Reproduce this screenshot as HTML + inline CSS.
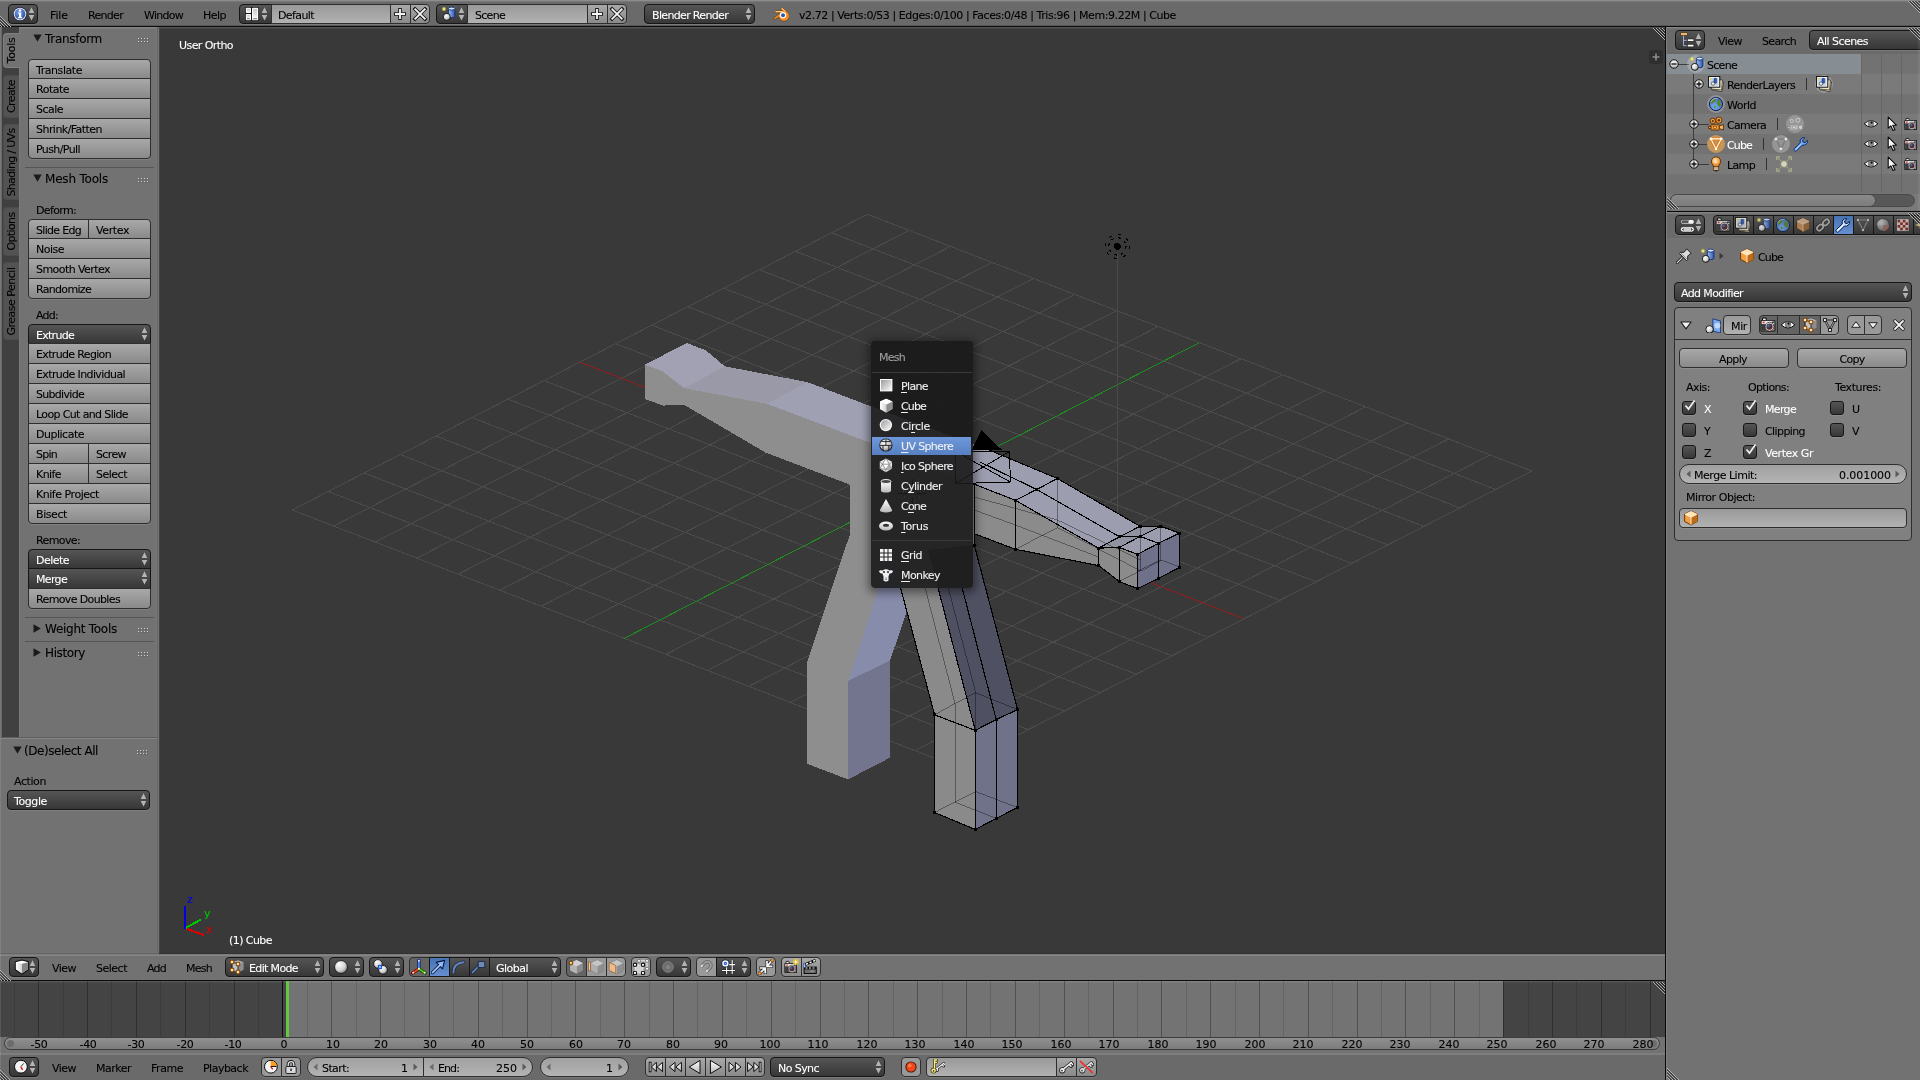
<!DOCTYPE html><html><head><meta charset="utf-8"><title>Blender</title><style>
*{box-sizing:border-box;margin:0;padding:0}
html,body{width:1920px;height:1080px;overflow:hidden;background:#727272}
body{position:relative;font:11px "DejaVu Sans","Liberation Sans",sans-serif;color:#000}
.a{position:absolute}
.t{-webkit-text-stroke:0.1px currentColor;position:absolute;font:11px "DejaVu Sans","Liberation Sans",sans-serif;line-height:13px;white-space:nowrap;color:#000}
.t12{font-size:12px;line-height:14px;}
.b{position:absolute;border:1px solid #2e2e2e;box-shadow:0 1px 0 rgba(255,255,255,0.1)}
.tool{background:linear-gradient(#a8a8a8,#8a8a8a)}
.menu{background:linear-gradient(#555,#373737);border-color:#161616}
.num{background:linear-gradient(#a0a0a0,#b4b4b4)}
.txt{background:linear-gradient(#999,#b2b2b2)}
.radio{background:linear-gradient(#555,#373737);border-color:#161616}
.radios{background:linear-gradient(#4773b3,#658fd1);border-color:#161616}
.tog{background:#999}
.togs{background:#646464}
.opt{background:linear-gradient(#555,#373737);border-color:#161616;border-radius:3px}
.hl{position:absolute;height:1px;background:#555}
</style></head><body><div id="root" style="position:absolute;left:0;top:0;width:1920px;height:1080px;will-change:transform"><svg width="0" height="0" style="position:absolute"><defs>
<linearGradient id="gW" x1="0" y1="0" x2="0" y2="1"><stop offset="0" stop-color="#fff"/><stop offset="1" stop-color="#b8b8b8"/></linearGradient>
<radialGradient id="gBall" cx="0.35" cy="0.3" r="0.8"><stop offset="0" stop-color="#fff"/><stop offset="0.6" stop-color="#d0d0d0"/><stop offset="1" stop-color="#707070"/></radialGradient>
<radialGradient id="gBlue" cx="0.4" cy="0.35" r="0.8"><stop offset="0" stop-color="#7aa0e8"/><stop offset="1" stop-color="#1c3f94"/></radialGradient>
<linearGradient id="gCyl" x1="0" y1="0" x2="1" y2="0"><stop offset="0" stop-color="#9ec0f0"/><stop offset="1" stop-color="#2a55b0"/></linearGradient>
<linearGradient id="gOr" x1="0" y1="0" x2="1" y2="1"><stop offset="0" stop-color="#ffd9a0"/><stop offset="1" stop-color="#d07818"/></linearGradient>
<radialGradient id="gGrey" cx="0.35" cy="0.3" r="0.8"><stop offset="0" stop-color="#c8c8c8"/><stop offset="1" stop-color="#606060"/></radialGradient>

<linearGradient id="gCube" x1="0" y1="0" x2="1" y2="0"><stop offset="0" stop-color="#fff"/><stop offset="1" stop-color="#d4d4d4"/></linearGradient>
<linearGradient id="gScr" x1="0" y1="0" x2="0" y2="1"><stop offset="0" stop-color="#c8c8c8"/><stop offset="1" stop-color="#f4f4f4"/></linearGradient>
<radialGradient id="gLens" cx="0.35" cy="0.35" r="0.8"><stop offset="0" stop-color="#5a70a8"/><stop offset="0.5" stop-color="#3a2a3a"/><stop offset="1" stop-color="#a03020"/></radialGradient>
<radialGradient id="gBulb" cx="0.4" cy="0.35" r="0.8"><stop offset="0" stop-color="#ffe8c0"/><stop offset="0.5" stop-color="#f0a040"/><stop offset="1" stop-color="#c06810"/></radialGradient>
<radialGradient id="gGlobe" cx="0.4" cy="0.7" r="0.9"><stop offset="0" stop-color="#78b0f0"/><stop offset="1" stop-color="#2858b0"/></radialGradient>

<linearGradient id="gPl" x1="0" y1="0" x2="1" y2="1"><stop offset="0" stop-color="#9c9c9c"/><stop offset="1" stop-color="#fafafa"/></linearGradient>
<symbol id="i-info" viewBox="0 0 16 16"><circle cx="8" cy="8" r="7" fill="#16244a"/><circle cx="8" cy="8" r="6.3" fill="#f0f0f0"/><circle cx="8" cy="8" r="5.4" fill="url(#gBlue)"/><path d="M6.3 6.6H9.2V11H10.2V12.2H6V11H7V7.8H6.3Z" fill="#fff"/><circle cx="8" cy="4.6" r="1.25" fill="#fff"/></symbol><symbol id="i-screen" viewBox="0 0 16 16"><rect x="2" y="1" width="14" height="14" rx="1.3" fill="#141414"/><rect x="2.8" y="1.8" width="5.2" height="5.3" rx="0.6" fill="#fff"/><rect x="3.8" y="2.8" width="3.2" height="3.3" fill="url(#gScr)"/><rect x="2.8" y="8" width="5.2" height="6.2" rx="0.6" fill="#fff"/><rect x="3.8" y="9" width="3.2" height="3" fill="url(#gScr)"/><rect x="9" y="1.8" width="6.2" height="12.4" rx="0.6" fill="#fff"/><rect x="10" y="2.8" width="4.2" height="9" fill="url(#gScr)"/><rect x="3.9" y="12.4" width="3" height="0.8" fill="#444"/><rect x="10.1" y="12.4" width="4" height="0.8" fill="#444"/></symbol><symbol id="i-scene" viewBox="0 0 16 16"><circle cx="4" cy="3" r="2.3" fill="#c8c030" opacity="0.45"/><circle cx="4" cy="3" r="1.2" fill="#fffce0" stroke="#d8d040" stroke-width="0.7"/><path d="M8.4 2.5V10.2A3.25 1.5 0 0 0 14.9 10.2V2.5Z" fill="url(#gCyl)" stroke="#16306e" stroke-width="0.9"/><ellipse cx="11.65" cy="2.6" rx="3.25" ry="1.5" fill="#d4e4ff" stroke="#16306e" stroke-width="0.9"/><circle cx="6.8" cy="10.9" r="3.5" fill="url(#gBall)" stroke="#111" stroke-width="0.9"/></symbol><symbol id="i-plus" viewBox="0 0 16 16"><path d="M8 2V14M2 8H14" stroke="#1a1a1a" stroke-width="3.6"/><path d="M8 3V13M3 8H13" stroke="#f6f6f6" stroke-width="1.8"/></symbol><symbol id="i-x" viewBox="0 0 16 16"><path d="M3 3L13 13M13 3L3 13" stroke="#1a1a1a" stroke-width="3.6" stroke-linecap="square"/><path d="M3.3 3.3L12.7 12.7M12.7 3.3L3.3 12.7" stroke="#f6f6f6" stroke-width="1.8" stroke-linecap="square"/></symbol><symbol id="i-blender" viewBox="0 0 16 16"><g stroke="#4a2800" stroke-width="0.5"><path d="M0.6 12.2L7.3 6.9L2.5 6.7Q1.6 5.5 2.9 4.7L9.4 4.6L7.7 2.9Q7.6 1.4 9.2 1.5L14.4 6A5.4 5.2 0 1 1 5.6 11L2.4 13.3Q0.8 13.6 0.6 12.2Z" fill="#f5902a"/></g><path d="M2.6 5.6L9.5 5.5M8.6 2.2L12.5 5.2" stroke="#ffd8a0" stroke-width="0.9" fill="none"/><circle cx="10" cy="9.2" r="3.1" fill="#fff"/><circle cx="10" cy="9.2" r="1.95" fill="#2a5aa8"/></symbol><symbol id="i-plane" viewBox="0 0 16 16"><rect x="2" y="1" width="12.4" height="12.4" fill="#fafafa"/><rect x="3" y="2" width="10.4" height="10.4" fill="url(#gPl)"/></symbol><symbol id="i-mcube" viewBox="0 0 16 16"><path d="M8.2 0.8L14.4 3.6V11L8.2 14.4L2 11V3.6Z" fill="#dcdcdc"/><path d="M8.2 6.6L14.4 3.6V11L8.2 14.4Z" fill="#8e8e8e"/><path d="M2 3.6L8.2 6.6V14.4L2 11Z" fill="url(#gCube)"/><path d="M8.2 0.8L14.4 3.6L8.2 6.6L2 3.6Z" fill="#fff"/></symbol><symbol id="i-circle" viewBox="0 0 16 16"><circle cx="7.9" cy="7.1" r="6.2" fill="#fafafa"/><circle cx="7.9" cy="7.1" r="5.1" fill="url(#gPl)"/></symbol><symbol id="i-uvsphere" viewBox="0 0 16 16"><circle cx="7.9" cy="7" r="6.6" fill="#1a1a1a"/><circle cx="7.9" cy="7" r="5.8" fill="url(#gBall)"/><path d="M2.2 7.4H13.6M7.9 1.2V7.4M5 7.4V12.2M10.8 7.4V12.2M3.4 3.6H12.4" stroke="#1a1a1a" stroke-width="0.9" fill="none"/></symbol><symbol id="i-ico" viewBox="0 0 16 16"><path d="M7.9 0.4L14 3.8V10.6L7.9 14.2L1.8 10.6V3.8Z" fill="#e8e8e8"/><path d="M7.9 0.4L4.4 6.2H11.4ZM4.4 6.2L7.9 11.6L11.4 6.2" fill="#fff" stroke="#555" stroke-width="0.6"/><path d="M1.8 3.8L4.4 6.2L1.8 10.6L7.9 11.6L14 10.6L11.4 6.2L14 3.8M7.9 11.6V14.2" fill="none" stroke="#666" stroke-width="0.6"/><path d="M11.4 6.2L14 10.6L7.9 11.6Z" fill="#aaa"/></symbol><symbol id="i-cyl" viewBox="0 0 16 16"><path d="M3 3.5V12.5A5 2 0 0 0 13 12.5V3.5Z" fill="url(#gW)"/><ellipse cx="8" cy="3.5" rx="5" ry="2" fill="#444" stroke="#eee" stroke-width="1"/></symbol><symbol id="i-cone" viewBox="0 0 16 16"><path d="M8 1L14.2 12.2A6.2 2.3 0 0 1 1.8 12.2Z" fill="url(#gW)"/></symbol><symbol id="i-torus" viewBox="0 0 16 16"><ellipse cx="8" cy="8" rx="7" ry="4.6" fill="url(#gW)"/><ellipse cx="8" cy="7.2" rx="3" ry="1.5" fill="#333"/></symbol><symbol id="i-grid" viewBox="0 0 16 16"><path d="M2 2H14V14H2Z" fill="#f4f4f4"/><path d="M6 2V14M10 2V14M2 6H14M2 10H14" stroke="#222" stroke-width="1"/></symbol><symbol id="i-monkey" viewBox="0 0 16 16"><path d="M1 4.5Q1.5 2.5 4.5 3.5Q8 1 11.5 3.5Q14.5 2.5 15 4.5Q14 7 11.5 6.5Q11 8.5 10.5 9V13.5Q8 15.5 5.5 13.5V9Q5 8.5 4.5 6.5Q2 7 1 4.5Z" fill="#f0f0f0"/><circle cx="6" cy="5" r="1.1" fill="#333"/><circle cx="10" cy="5" r="1.1" fill="#333"/><path d="M6.8 11H9.2M6.8 12.5H9.2" stroke="#777" stroke-width="0.8"/></symbol><symbol id="i-view3d" viewBox="0 0 16 16"><path d="M2.3 2.8L9 1L15.6 2.8V10.5L9 15L2.3 10.5Z" fill="#fff" stroke="#0c0c0c" stroke-width="1.1" stroke-linejoin="round"/><path d="M9 4.8L15.1 3.2V10.2L9 14.4Z" fill="#858585"/><path d="M2.9 3.2L9 4.8V14.4L2.9 10.2Z" fill="url(#gCube)"/></symbol><symbol id="i-editmode" viewBox="0 0 16 16"><path d="M3 3L9 1L14.5 3V10.8L9 13.5L3 11Z" fill="#c4c4c4" stroke="#3a3a3a" stroke-width="0.5"/><path d="M9 5L14.5 3V10.8L9 13.5Z" fill="#8e8e8e"/><path d="M3 3V11M3 3L9 5V13" stroke="#1a1a1a" stroke-width="0.9" fill="none"/><g fill="#ffe6c0" stroke="#8a4600" stroke-width="1"><rect x="1.3" y="1.3" width="3.4" height="3.4"/><rect x="7.3" y="3.3" width="3.4" height="3.4"/><rect x="1.3" y="9.3" width="3.4" height="3.4"/><rect x="7.3" y="11.3" width="3.4" height="3.4"/></g></symbol><symbol id="i-solid" viewBox="0 0 16 16"><circle cx="8" cy="8" r="6.4" fill="url(#gBall)" stroke="#0c0c0c" stroke-width="0.8"/></symbol><symbol id="i-pivot" viewBox="0 0 16 16"><circle cx="5" cy="4.9" r="4.3" fill="url(#gBall)" stroke="#0c0c0c" stroke-width="0.8"/><circle cx="10" cy="10.8" r="4.3" fill="url(#gBall)" stroke="#0c0c0c" stroke-width="0.8"/><rect x="5.6" y="6.6" width="2.8" height="2.8" fill="#fff" stroke="#1858d8" stroke-width="1.3"/></symbol><symbol id="i-manip" viewBox="0 0 16 16"><path d="M7.9 9.8V1" stroke="#0a1a60" stroke-width="3.2" stroke-linecap="round"/><path d="M7.9 9.8L1.6 14" stroke="#600" stroke-width="3.2" stroke-linecap="round"/><path d="M7.9 9.8L14.2 14" stroke="#0a4a00" stroke-width="3.2" stroke-linecap="round"/><path d="M7.9 9.8V1.2" stroke="#4a8af8" stroke-width="1.8" stroke-linecap="round"/><path d="M7.9 9.8L1.8 13.9" stroke="#f04828" stroke-width="1.8" stroke-linecap="round"/><path d="M7.9 9.8L14 13.9" stroke="#58c818" stroke-width="1.8" stroke-linecap="round"/><circle cx="7.9" cy="1.8" r="0.9" fill="#fff"/><circle cx="2.2" cy="13.6" r="0.9" fill="#fff"/><circle cx="13.6" cy="13.6" r="0.9" fill="#fff"/><circle cx="7.9" cy="9.8" r="1" fill="#fff8e0"/></symbol><symbol id="i-m_trans" viewBox="0 0 16 16"><path d="M1.5 13.6L8.5 6.6" stroke="#08183c" stroke-width="3.4" stroke-linecap="round"/><path d="M5.2 3.4L13.6 1.4L11.6 9.8Z" fill="#8ab8ff" stroke="#08183c" stroke-width="1.1" stroke-linejoin="round"/><path d="M1.5 13.6L9.5 5.6" stroke="#a4c8ff" stroke-width="1.7" stroke-linecap="round"/></symbol><symbol id="i-m_rot" viewBox="0 0 16 16"><path d="M2.4 13.5Q2.4 4.2 12.6 3.2" fill="none" stroke="#1e2c48" stroke-width="3.4" stroke-linecap="round"/><path d="M2.4 13.5Q2.4 4.2 12.6 3.2" fill="none" stroke="#6484b8" stroke-width="1.9" stroke-linecap="round"/></symbol><symbol id="i-m_scale" viewBox="0 0 16 16"><path d="M1.6 13.4L8 7" stroke="#1e2c48" stroke-width="3.2" stroke-linecap="round"/><path d="M1.6 13.4L8 7" stroke="#6484b8" stroke-width="1.7" stroke-linecap="round"/><rect x="7.2" y="2.4" width="6.6" height="6.2" fill="#7088b4" stroke="#1e2c48" stroke-width="1"/></symbol><symbol id="i-vertsel" viewBox="0 0 16 16"><g opacity="1"><path d="M2.2 4L8.5 1L14.8 4V11.6L8.5 14.8L2.2 11.6Z" fill="#c6c6c6" stroke="#4a4a4a" stroke-width="0.6" stroke-linejoin="round"/><path d="M8.5 7.2L14.8 4V11.6L8.5 14.8Z" fill="#8c8c8c"/><path d="M2.2 4L8.5 7.2V14.8L2.2 11.6Z" fill="#b4b4b4"/><path d="M2.2 4L8.5 1L14.8 4L8.5 7.2Z" fill="#d0d0d0"/></g><circle cx="3" cy="4" r="1.9" fill="#ffb040" stroke="#5a2a00" stroke-width="0.9"/><circle cx="2.7" cy="3.7" r="0.8" fill="#ffe0a0"/></symbol><symbol id="i-edgesel" viewBox="0 0 16 16"><g opacity="0.8"><path d="M3 4L9.3 1L15.6 4V11.6L9.3 14.8L3 11.6Z" fill="#c6c6c6" stroke="#4a4a4a" stroke-width="0.6" stroke-linejoin="round"/><path d="M9.3 7.2L15.6 4V11.6L9.3 14.8Z" fill="#8c8c8c"/><path d="M3 4L9.3 7.2V14.8L3 11.6Z" fill="#b4b4b4"/><path d="M3 4L9.3 1L15.6 4L9.3 7.2Z" fill="#d0d0d0"/></g><rect x="0.4" y="3" width="2.1" height="8.8" fill="#f4c898" stroke="#8a5a2a" stroke-width="0.7"/></symbol><symbol id="i-facesel" viewBox="0 0 16 16"><g opacity="0.8"><path d="M2.4 4L8.7 1L15.0 4V11.6L8.7 14.8L2.4 11.6Z" fill="#c6c6c6" stroke="#4a4a4a" stroke-width="0.6" stroke-linejoin="round"/><path d="M8.7 7.2L15.0 4V11.6L8.7 14.8Z" fill="#8c8c8c"/><path d="M2.4 4L8.7 7.2V14.8L2.4 11.6Z" fill="#b4b4b4"/><path d="M2.4 4L8.7 1L15.0 4L8.7 7.2Z" fill="#d0d0d0"/></g><path d="M1.2 3.3L7.7 6.5V14.5L1.2 11.5Z" fill="#ecbc8c" stroke="#9a6a3a" stroke-width="0.8"/></symbol><symbol id="i-limit" viewBox="0 0 16 16"><path d="M6 1.9H14V9.8" fill="none" stroke="#e8e8e8" stroke-width="1.2"/><path d="M6 1.9L2 5.8M14 9.8L10 14" stroke="#777" stroke-width="0.6"/><g fill="#fff" stroke="#6a6a6a" stroke-width="0.8"><circle cx="6" cy="1.9" r="1.5"/><circle cx="14" cy="1.9" r="1.5"/><circle cx="14" cy="9.8" r="1.5"/></g><rect x="2" y="5.8" width="8" height="8.2" fill="#d2d2d2" stroke="#f8f8f8" stroke-width="1" stroke-dasharray="1.6 1"/><g fill="#fff" stroke="#0a0a0a" stroke-width="1.1"><circle cx="2" cy="5.8" r="1.7"/><circle cx="10" cy="5.8" r="1.7"/><circle cx="2" cy="14" r="1.7"/><circle cx="10" cy="14" r="1.7"/></g></symbol><symbol id="i-prop" viewBox="0 0 16 16"><circle cx="8" cy="8" r="5.3" fill="#6e6e6e" stroke="#7e7e7e" stroke-width="1"/><circle cx="8" cy="8" r="2.6" fill="#828282" stroke="#666" stroke-width="0.6"/></symbol><symbol id="i-magnet" viewBox="0 0 16 16"><g transform="translate(9.3 6.4) rotate(45)"><path d="M-3.6 5.2V0A3.6 3.6 0 0 1 3.6 0V5.2" fill="none" stroke="#5e5e5e" stroke-width="3.4"/><path d="M-3.6 5.2V0A3.6 3.6 0 0 1 3.6 0V5.2" fill="none" stroke="#9c9c9c" stroke-width="2"/><path d="M-3.6 5.2V3M3.6 5.2V3" stroke="#e0e0e0" stroke-width="2"/></g></symbol><symbol id="i-snapgrid" viewBox="0 0 16 16"><path d="M7.6 2.5V15M13.2 1V15M3 5.6H16M3 11.5H16" stroke="#1a1a1a" stroke-width="2.4" opacity="0.6"/><path d="M7.6 2.5V15M13.2 1V15M3 5.6H16M3 11.5H16" stroke="#f8f8f8" stroke-width="1.1"/><circle cx="6.4" cy="4.4" r="3.9" fill="#0c1c48"/><circle cx="6.4" cy="4.4" r="3.2" fill="#f4f4f4"/><circle cx="6.4" cy="4.4" r="1.6" fill="#1a58e0"/><circle cx="6.4" cy="4.4" r="0.5" fill="#cde"/></symbol><symbol id="i-snaptarget" viewBox="0 0 16 16"><g stroke-linecap="square" fill="none"><path d="M13.8 1.8L9.6 6.6M9 2.6V7.3H13.6" stroke="#222" stroke-width="3"/><path d="M2.2 13.8L6.6 9.6M2.6 9H7.2V13.6" stroke="#222" stroke-width="3"/><path d="M13.8 1.8L9.6 6.6M9 2.6V7.3H13.6" stroke="#f8f8f8" stroke-width="1.7"/><path d="M2.2 13.8L6.6 9.6M2.6 9H7.2V13.6" stroke="#f8f8f8" stroke-width="1.7"/></g><circle cx="14.4" cy="1.2" r="1.6" fill="#f0a040" stroke="#6a3a00" stroke-width="0.7"/><circle cx="1.6" cy="14.4" r="1.6" fill="#f0a040" stroke="#6a3a00" stroke-width="0.7"/></symbol><symbol id="i-render_still" viewBox="0 0 16 16"><rect x="3" y="2.4" width="3.2" height="2.4" rx="0.8" fill="#f0f0f0" stroke="#0c0c0c" stroke-width="0.9"/><rect x="1.4" y="4" width="12.6" height="10" rx="0.9" fill="#0c0c0c"/><rect x="2.2" y="4.8" width="11" height="2.8" fill="#e4e4e4"/><rect x="2.2" y="7.6" width="11" height="5.6" fill="#9a9a9a"/><rect x="2.2" y="7.6" width="3.6" height="5.6" fill="#3c3c3c"/><circle cx="9" cy="9.8" r="3.7" fill="#f4f4f4" stroke="#222" stroke-width="0.6"/><circle cx="9" cy="9.8" r="2.7" fill="url(#gLens)"/><rect x="3.2" y="5.5" width="1.5" height="1.3" fill="#f01818"/><rect x="11" y="5.4" width="2" height="1.2" fill="#223"/><circle cx="12.8" cy="3" r="3" fill="#e4c41c" opacity="0.9"/><path d="M12.8 0.2L13.4 2.4L15.6 3L13.4 3.6L12.8 5.8L12.2 3.6L10 3L12.2 2.4Z" fill="#fff"/></symbol><symbol id="i-render_anim" viewBox="0 0 16 16"><path d="M0.6 7.6H13.8V15H0.6Z" fill="#0c0c0c"/><rect x="1.6" y="10.4" width="11.2" height="3.6" fill="#6c6c6c"/><path d="M2.5 9H4.5M6 9H8M9.5 9H11.5" stroke="#f4f4f4" stroke-width="1"/><path d="M7 12.2H11.5M9.2 11V13.4" stroke="#9a9a9a" stroke-width="0.8"/><path d="M1 6L12.6 1.2" stroke="#0c0c0c" stroke-width="2.8"/><path d="M3 5.2L5 4.4M6.6 3.7L8.6 2.9M10.2 2.2L12.2 1.4" stroke="#f4f4f4" stroke-width="1.5"/><path d="M0.4 4.4L2 4L2.6 8.6L0.6 8.6Z" fill="#a8c8f8" stroke="#1a3a80" stroke-width="0.5"/></symbol><symbol id="i-time" viewBox="0 0 16 16"><circle cx="7.9" cy="7.7" r="6.4" fill="#f4f4f4" stroke="#0c0c0c" stroke-width="1"/><circle cx="7.9" cy="7.7" r="5" fill="none" stroke="#c8c8c8" stroke-width="0.7" stroke-dasharray="0.6 3.3"/><path d="M7.9 7.7L10.7 4.4" stroke="#222" stroke-width="0.9"/><path d="M7.9 7.9L9.6 10.8" stroke="#e01010" stroke-width="1.3"/></symbol><symbol id="i-preview_range" viewBox="0 0 16 16"><circle cx="7.9" cy="7.7" r="6.4" fill="#f4f4f4" stroke="#0c0c0c" stroke-width="1"/><path d="M7.6 7.4V1.9A5.8 5.8 0 0 1 13.7 7.4Z" fill="#ff9c10"/><path d="M7.6 7.5H13.6" stroke="#111" stroke-width="1"/><path d="M7.9 7.9L9.8 10.3" stroke="#e01010" stroke-width="1.3"/></symbol><symbol id="i-lock" viewBox="0 0 16 16"><path d="M5.2 8V5.4A2.8 2.8 0 0 1 10.8 5.4V8" fill="none" stroke="#111" stroke-width="3"/><path d="M5.2 8V5.4A2.8 2.8 0 0 1 10.8 5.4V8" fill="none" stroke="#e8e8e8" stroke-width="1.3"/><rect x="2.9" y="7.6" width="10.2" height="6.8" rx="0.6" fill="#ececec" stroke="#111" stroke-width="1"/><path d="M3.6 9.6H12.4M3.6 11H12.4M3.6 12.4H12.4" stroke="#b8c0c8" stroke-width="0.6"/><rect x="7.4" y="9.6" width="1.3" height="2.4" fill="#111"/></symbol><symbol id="i-rew" viewBox="0 0 16 16"><rect x="2.2" y="3.2" width="1.8" height="9.6" fill="#f4f4f4" stroke="#0c0c0c" stroke-width="0.9"/><path d="M9.4 3.4V12.6L4.4 8Z" fill="url(#gW)" stroke="#0c0c0c" stroke-width="1" stroke-linejoin="round"/><path d="M15.6 3.4V12.6L10.2 8Z" fill="url(#gW)" stroke="#0c0c0c" stroke-width="1" stroke-linejoin="round"/></symbol><symbol id="i-prevkey" viewBox="0 0 16 16"><path d="M8 3.4V12.6L2.4 8Z" fill="url(#gW)" stroke="#0c0c0c" stroke-width="1" stroke-linejoin="round"/><path d="M14.4 3.4V12.6L8.8 8Z" fill="url(#gW)" stroke="#0c0c0c" stroke-width="1" stroke-linejoin="round"/></symbol><symbol id="i-playrev" viewBox="0 0 16 16"><path d="M13 1.4V14.6L2.2 8Z" fill="url(#gW)" stroke="#0c0c0c" stroke-width="1" stroke-linejoin="round"/></symbol><symbol id="i-play" viewBox="0 0 16 16"><path d="M3.4 1.4V14.6L14.4 8Z" fill="url(#gW)" stroke="#0c0c0c" stroke-width="1" stroke-linejoin="round"/></symbol><symbol id="i-nextkey" viewBox="0 0 16 16"><path d="M2 3.4V12.6L7.6 8Z" fill="url(#gW)" stroke="#0c0c0c" stroke-width="1" stroke-linejoin="round"/><path d="M8.4 3.4V12.6L14 8Z" fill="url(#gW)" stroke="#0c0c0c" stroke-width="1" stroke-linejoin="round"/></symbol><symbol id="i-ff" viewBox="0 0 16 16"><path d="M0.6 3.4V12.6L6 8Z" fill="url(#gW)" stroke="#0c0c0c" stroke-width="1" stroke-linejoin="round"/><path d="M6.8 3.4V12.6L12 8Z" fill="url(#gW)" stroke="#0c0c0c" stroke-width="1" stroke-linejoin="round"/><rect x="12.2" y="3.2" width="1.8" height="9.6" fill="#f4f4f4" stroke="#0c0c0c" stroke-width="0.9"/></symbol><symbol id="i-rec" viewBox="0 0 16 16"><circle cx="8" cy="8" r="5.6" fill="#3a1208"/><circle cx="8" cy="8" r="4.7" fill="#f04818"/><circle cx="6.8" cy="6.6" r="1.7" fill="#ff9870" opacity="0.7"/></symbol><symbol id="i-keyingset" viewBox="0 0 16 16"><g transform="translate(3.8 1.2) scale(0.82)"><path d="M6 9.6L13.4 3.6M11.4 5.4L13.2 7.4M13.2 3.8L14.8 5.6" stroke="#1a1a1a" stroke-width="3" stroke-linecap="round" fill="none"/><circle cx="4.3" cy="11.3" r="3.1" fill="#1a1a1a"/><path d="M6 9.6L13.4 3.6M11.4 5.4L13 7.2M13.2 3.8L14.6 5.4" stroke="#f2f2f2" stroke-width="1.5" stroke-linecap="round" fill="none"/><circle cx="4.3" cy="11.3" r="2.3" fill="#f2f2f2"/><circle cx="4" cy="11.6" r="0.9" fill="#333"/></g><path d="M5.6 9V1H7.8M5.6 3.4H7.4" stroke="#4a4200" stroke-width="2.8" stroke-linecap="round" fill="none"/><circle cx="4.6" cy="11.6" r="3" fill="#4a4200"/><path d="M5.6 9V1H7.8M5.6 3.4H7.4" stroke="#f4ec9c" stroke-width="1.3" stroke-linecap="round" fill="none"/><circle cx="4.6" cy="11.6" r="2.2" fill="#f4ec9c"/><circle cx="4.6" cy="11.9" r="0.9" fill="#4a4200"/></symbol><symbol id="i-key_hlt" viewBox="0 0 16 16"><path d="M6 9.6L13.4 3.6M11.4 5.4L13.2 7.4M13.2 3.8L14.8 5.6" stroke="#1a1a1a" stroke-width="3" stroke-linecap="round" fill="none"/><circle cx="4.3" cy="11.3" r="3.1" fill="#1a1a1a"/><path d="M6 9.6L13.4 3.6M11.4 5.4L13 7.2M13.2 3.8L14.6 5.4" stroke="#f2f2f2" stroke-width="1.5" stroke-linecap="round" fill="none"/><circle cx="4.3" cy="11.3" r="2.3" fill="#f2f2f2"/><circle cx="4" cy="11.6" r="0.9" fill="#333"/></symbol><symbol id="i-key_dehlt" viewBox="0 0 16 16"><g opacity="0.8"><path d="M6 9.6L13.4 3.6M11.4 5.4L13.2 7.4M13.2 3.8L14.8 5.6" stroke="#1a1a1a" stroke-width="3" stroke-linecap="round" fill="none"/><circle cx="4.3" cy="11.3" r="3.1" fill="#1a1a1a"/><path d="M6 9.6L13.4 3.6M11.4 5.4L13 7.2M13.2 3.8L14.6 5.4" stroke="#f2f2f2" stroke-width="1.5" stroke-linecap="round" fill="none"/><circle cx="4.3" cy="11.3" r="2.3" fill="#f2f2f2"/><circle cx="4" cy="11.6" r="0.9" fill="#333"/></g><path d="M2.4 2.4L14.4 13.6" stroke="#f03030" stroke-width="1.7" stroke-linecap="round"/></symbol><symbol id="i-outliner" viewBox="0 0 16 16"><rect x="1.3" y="0.5" width="7.4" height="3" fill="#6a3a00"/><rect x="2" y="1.2" width="6" height="1.6" fill="#ffd8a0"/><path d="M4.5 3.6V13.7H7.5M4.5 8.4H7.5" fill="none" stroke="#98b0d8" stroke-width="1"/><rect x="8" y="6.6" width="7.2" height="3.2" fill="#222"/><rect x="8.7" y="7.3" width="5.8" height="1.8" fill="#fff"/><rect x="8" y="12" width="7.2" height="3.2" fill="#222"/><rect x="8.7" y="12.7" width="5.8" height="1.8" fill="#fff"/></symbol><symbol id="i-renderlayers" viewBox="0 0 16 16"><path d="M5.6 4.2L15.6 6L14 15.6L4 13.8Z" fill="#e4dcb8" stroke="#222" stroke-width="0.7"/><path d="M4.2 3L14.4 4L13.6 14L3.4 13Z" fill="#f0e8c8" stroke="#222" stroke-width="0.7"/><rect x="0.6" y="0.4" width="11.2" height="10.8" fill="#fcfcfc" stroke="#0c0c0c" stroke-width="1"/><rect x="2" y="1.8" width="8.4" height="8" fill="#c4d0e4"/><rect x="6" y="2.2" width="2.6" height="5" rx="0.8" fill="#2a5cc0" stroke="#16306e" stroke-width="0.5"/><circle cx="5" cy="7.6" r="1.7" fill="#f4f4f4" stroke="#222" stroke-width="0.6"/><circle cx="2.8" cy="2.6" r="0.9" fill="#f0d820"/></symbol><symbol id="i-world" viewBox="0 0 16 16"><circle cx="8" cy="8" r="6.6" fill="url(#gGlobe)" stroke="#10204a" stroke-width="1"/><path d="M3.2 4.6Q5 2.4 7.6 2.8Q8.8 4.2 7.2 5.4L5.4 6.2Q4.8 8.2 3.4 7.6Q2.2 6.4 3.2 4.6ZM9.8 3.2Q12 3.4 13 5.2L12 7.2L13.6 9Q12.6 11.2 10.8 10.4L9.4 8.4Q8.2 7.4 9 6.2L10.6 5.6ZM6.4 9.4Q8 9.8 7.8 11.6Q6.8 12.6 6 11.4Z" fill="#5a8428"/><path d="M2.6 6.2Q4.6 2 9.6 2.2" fill="none" stroke="#e0ecff" stroke-width="0.9" opacity="0.7"/></symbol><symbol id="i-camera_ob" viewBox="0 0 16 16"><g opacity="1" stroke="#5a2c00" stroke-width="0.9"><circle cx="4.8" cy="4.9" r="2.7" fill="#f49a38"/><circle cx="10.9" cy="4.2" r="3.1" fill="#f49a38"/><rect x="2.7" y="8.8" width="8.6" height="5.2" rx="0.8" fill="#f49a38"/><path d="M11.3 10L15.4 8.6V14L11.3 12.6Z" fill="#ffb868"/><rect x="0.6" y="10.4" width="2.4" height="2" fill="#ffb868"/></g><g opacity="1"><circle cx="4.8" cy="4.9" r="1" fill="#5a2c00"/><circle cx="10.9" cy="4.2" r="1.2" fill="#5a2c00"/><rect x="5.4" y="10.2" width="3" height="2.4" fill="#ffb868" stroke="#5a2c00" stroke-width="0.5"/></g></symbol><symbol id="i-camera_data" viewBox="0 0 16 16"><g opacity="0.9" stroke="#8c8c8c" stroke-width="0.9"><circle cx="4.8" cy="4.9" r="2.7" fill="#c4c4c4"/><circle cx="10.9" cy="4.2" r="3.1" fill="#c4c4c4"/><rect x="2.7" y="8.8" width="8.6" height="5.2" rx="0.8" fill="#c4c4c4"/><path d="M11.3 10L15.4 8.6V14L11.3 12.6Z" fill="#d8d8d8"/><rect x="0.6" y="10.4" width="2.4" height="2" fill="#d8d8d8"/></g><g opacity="0.9"><circle cx="4.8" cy="4.9" r="1" fill="#8c8c8c"/><circle cx="10.9" cy="4.2" r="1.2" fill="#8c8c8c"/><rect x="5.4" y="10.2" width="3" height="2.4" fill="#d8d8d8" stroke="#8c8c8c" stroke-width="0.5"/></g></symbol><symbol id="i-mesh_ob" viewBox="0 0 16 16"><path d="M3 2.9H13.2L8 13Z" fill="none" stroke="#e07810" stroke-width="3" stroke-linejoin="round"/><path d="M3 2.9H13.2L8 13Z" fill="none" stroke="#fff" stroke-width="1.1" stroke-linejoin="round"/><g fill="#fff"><circle cx="3" cy="2.9" r="1.3"/><circle cx="13.2" cy="2.9" r="1.3"/><circle cx="8" cy="13" r="1.3"/></g></symbol><symbol id="i-mesh_data" viewBox="0 0 16 16"><path d="M3 3H12.8L7.9 12.8Z" fill="none" stroke="#7e7e7e" stroke-width="1.6" stroke-linejoin="round"/><g fill="#fafafa" stroke="#8a8a8a" stroke-width="0.5"><circle cx="3" cy="3" r="1.5"/><circle cx="12.8" cy="3" r="1.5"/><circle cx="7.9" cy="12.8" r="1.5"/></g></symbol><symbol id="i-mesh_data_w" viewBox="0 0 16 16"><path d="M3 3H13L8 13Z" fill="none" stroke="#1a1a1a" stroke-width="2.2" stroke-linejoin="round"/><path d="M3 3H13L8 13Z" fill="none" stroke="#b8b8b8" stroke-width="0.9" stroke-linejoin="round"/><g fill="#fafafa" stroke="#0c0c0c" stroke-width="0.9"><rect x="1.6" y="1.6" width="2.8" height="2.8"/><rect x="11.6" y="1.6" width="2.8" height="2.8"/><rect x="6.6" y="11.6" width="2.8" height="2.8"/></g></symbol><symbol id="i-wrench" viewBox="0 0 16 16"><path d="M14.4 4.4L12 6.6L10 6L9.5 4L11.9 1.7A3.9 3.9 0 0 0 7.3 6.9L1.4 12.6A1.55 1.55 0 0 0 3.6 14.8L9.4 9A3.9 3.9 0 0 0 14.4 4.4Z" fill="#6ca4f4" stroke="#10306e" stroke-width="1" stroke-linejoin="round"/><path d="M2.6 13.6L8.6 7.6" stroke="#d0e4ff" stroke-width="0.9"/></symbol><symbol id="i-wrench_w" viewBox="0 0 16 16"><path d="M14.4 4.4L12 6.6L10 6L9.5 4L11.9 1.7A3.9 3.9 0 0 0 7.3 6.9L1.4 12.6A1.55 1.55 0 0 0 3.6 14.8L9.4 9A3.9 3.9 0 0 0 14.4 4.4Z" fill="#c4dcff" stroke="#0a1a40" stroke-width="1" stroke-linejoin="round"/><path d="M2.6 13.6L8.6 7.6" stroke="#fff" stroke-width="0.9"/></symbol><symbol id="i-lamp_ob" viewBox="0 0 16 16"><path d="M8.1 0.8A4.7 4.7 0 0 0 5.2 9.2L5.6 11H10.6L11 9.2A4.7 4.7 0 0 0 8.1 0.8Z" fill="url(#gBulb)" stroke="#5a2c00" stroke-width="0.9"/><path d="M6.4 5.4L7.3 6.8L8.1 5.6L8.9 6.8L9.8 5.4" fill="none" stroke="#fff4e0" stroke-width="0.8"/><rect x="5.5" y="10.8" width="5.2" height="3.6" fill="#f4f4f4" stroke="#5a2c00" stroke-width="0.8"/><path d="M5.5 12H10.7M5.5 13.2H10.7" stroke="#8a5a20" stroke-width="0.6"/><path d="M6.8 14.6H9.4L8.1 16Z" fill="#111"/></symbol><symbol id="i-lamp_data" viewBox="0 0 16 16"><circle cx="8" cy="8" r="3.1" fill="#d6d6d0" stroke="#a0a078" stroke-width="1.1"/><path d="M0.8 4V0.8H4M12 0.8H15.2V4M15.2 12V15.2H12M4 15.2H0.8V12" fill="none" stroke="#b0b08c" stroke-width="1.3"/><path d="M2 2L5.4 5.4M14 2L10.6 5.4M14 14L10.6 10.6M2 14L5.4 10.6" stroke="#a8a888" stroke-width="1"/></symbol><symbol id="i-eye" viewBox="0 0 16 16"><path d="M1.2 7.8Q8 1.4 14.9 7.8Q8 14.2 1.2 7.8Z" fill="#fff" stroke="#0c0c0c" stroke-width="1"/><circle cx="8" cy="7.6" r="2.9" fill="#8c8c8c"/><circle cx="8" cy="7.6" r="2.9" fill="none" stroke="#555" stroke-width="0.5"/><circle cx="8.6" cy="6.6" r="1.1" fill="#0c0c0c"/></symbol><symbol id="i-cursor" viewBox="0 0 16 16"><path d="M4.2 1.2V12.2L6.8 9.8L9 14.6L10.9 13.7L8.8 9.2H12.4Z" fill="#fafafa" stroke="#0c0c0c" stroke-width="1.1" stroke-linejoin="round"/></symbol><symbol id="i-cam_small" viewBox="0 0 16 16"><rect x="3" y="2.4" width="3.2" height="2.4" rx="0.8" fill="#f0f0f0" stroke="#0c0c0c" stroke-width="0.9"/><rect x="1.4" y="4" width="12.6" height="10" rx="0.9" fill="#0c0c0c"/><rect x="2.2" y="4.8" width="11" height="2.8" fill="#e4e4e4"/><rect x="2.2" y="7.6" width="11" height="5.6" fill="#9a9a9a"/><rect x="2.2" y="7.6" width="3.6" height="5.6" fill="#3c3c3c"/><circle cx="9" cy="9.8" r="3.7" fill="#f4f4f4" stroke="#222" stroke-width="0.6"/><circle cx="9" cy="9.8" r="2.7" fill="url(#gLens)"/><rect x="3.2" y="5.5" width="1.5" height="1.3" fill="#f01818"/><rect x="11" y="5.4" width="2" height="1.2" fill="#223"/></symbol><symbol id="i-buttons" viewBox="0 0 16 16"><rect x="1.5" y="2.4" width="13.8" height="4.8" rx="2.4" fill="#fafafa" stroke="#111" stroke-width="0.6"/><rect x="2.4" y="3.3" width="12" height="3" rx="1.5" fill="#555"/><rect x="9.4" y="3" width="5.2" height="3.6" rx="1.6" fill="#f4f4f4"/><rect x="1.5" y="9.8" width="13.8" height="5.2" rx="2.4" fill="#fafafa" stroke="#111" stroke-width="0.6"/><rect x="5" y="11" width="6.8" height="2.8" fill="#c8c8c8"/><path d="M4.6 10.9L3 12.4L4.6 13.9ZM12.2 10.9L13.8 12.4L12.2 13.9Z" fill="#111"/></symbol><symbol id="i-object" viewBox="0 0 16 16"><path d="M8 1L14.4 4V11.4L8 15L1.6 11.4V4Z" fill="#f4a040" stroke="#5a2c00" stroke-width="0.9" stroke-linejoin="round"/><path d="M8 7.2L14.4 4V11.4L8 15Z" fill="#bc6c1a"/><path d="M8 1L14.4 4L8 7.2L1.6 4Z" fill="#ffe4b8"/><path d="M1.9 4.2L8 7.2L14.1 4.2M8 7.2V14.6" fill="none" stroke="#fff0d8" stroke-width="0.9"/></symbol><symbol id="i-constraint" viewBox="0 0 16 16"><g fill="none" stroke="#2a2a2a" stroke-width="3.4"><rect x="-3.4" y="-2.3" width="6.8" height="4.6" rx="2.3" transform="translate(5 10.6) rotate(-40)"/><rect x="-3.4" y="-2.3" width="6.8" height="4.6" rx="2.3" transform="translate(11 5.4) rotate(-40)"/></g><g fill="none" stroke="#b4b4b4" stroke-width="1.7"><rect x="-3.4" y="-2.3" width="6.8" height="4.6" rx="2.3" transform="translate(5 10.6) rotate(-40)"/><rect x="-3.4" y="-2.3" width="6.8" height="4.6" rx="2.3" transform="translate(11 5.4) rotate(-40)"/></g></symbol><symbol id="i-material" viewBox="0 0 16 16"><circle cx="8" cy="8" r="6.4" fill="url(#gGrey)" stroke="#222" stroke-width="0.8"/><path d="M8 8H14.4A6.4 6.4 0 0 1 8 14.4Z" fill="#a06458" opacity="0.75"/><path d="M8 8V1.6A6.4 6.4 0 0 0 1.6 8Z" fill="#c8c8c8" opacity="0.35"/></symbol><symbol id="i-texture" viewBox="0 0 16 16"><rect x="1.6" y="1.8" width="12.4" height="12.4" fill="#d4cccc" stroke="#333" stroke-width="0.7"/><g fill="#8c2418"><rect x="2.6" y="2.8" width="2.6" height="2.6"/><rect x="7.8" y="2.8" width="2.6" height="2.6"/><rect x="5.2" y="5.4" width="2.6" height="2.6"/><rect x="10.4" y="5.4" width="2.6" height="2.6"/><rect x="2.6" y="8" width="2.6" height="2.6"/><rect x="7.8" y="8" width="2.6" height="2.6"/><rect x="5.2" y="10.6" width="2.6" height="2.6"/><rect x="10.4" y="10.6" width="2.6" height="2.6"/></g></symbol><symbol id="i-particles" viewBox="0 0 16 16"><circle cx="8" cy="8" r="5" fill="#d8c060" opacity="0.4"/><path d="M8 0.5L9.4 6.2L15.5 8L9.4 9.6L8 15.5L6.6 9.6L0.5 8L6.6 6.2Z" fill="#fffce8" stroke="#c8a838" stroke-width="0.5"/></symbol><symbol id="i-pin" viewBox="0 0 16 16"><path d="M6.2 9.6L0.9 15" stroke="#111" stroke-width="2.6" stroke-linecap="round"/><path d="M6.2 9.6L1.1 14.8" stroke="#ececec" stroke-width="1.1" stroke-linecap="round"/><path d="M10.6 0.8L15.2 5.4L13.2 6.6L11.6 8.2L11.8 11.4L10.4 12.6L3.6 5.6L4.8 4.2L7.8 4.4L9.4 2.8Z" fill="#dcdcdc" stroke="#111" stroke-width="0.9" stroke-linejoin="round"/><path d="M5 5L10.8 11" stroke="#888" stroke-width="1"/></symbol><symbol id="i-mod_mirror" viewBox="0 0 16 16"><path d="M7.8 1.8L15.6 4V16L7.8 14Z" fill="#7ca8ec" stroke="#16367c" stroke-width="0.9" stroke-linejoin="round"/><circle cx="12.4" cy="8.6" r="2.9" fill="#cfe0fa" opacity="0.85"/><circle cx="4.6" cy="12.4" r="3.8" fill="url(#gBall)" stroke="#0c0c0c" stroke-width="0.9"/></symbol><symbol id="i-cam_big" viewBox="0 0 16 16"><g transform="translate(-1 -1.8) scale(1.17)"><rect x="3" y="2.4" width="3.2" height="2.4" rx="0.8" fill="#f0f0f0" stroke="#0c0c0c" stroke-width="0.9"/><rect x="1.4" y="4" width="12.6" height="10" rx="0.9" fill="#0c0c0c"/><rect x="2.2" y="4.8" width="11" height="2.8" fill="#e4e4e4"/><rect x="2.2" y="7.6" width="11" height="5.6" fill="#9a9a9a"/><rect x="2.2" y="7.6" width="3.6" height="5.6" fill="#3c3c3c"/><circle cx="9" cy="9.8" r="3.7" fill="#f4f4f4" stroke="#222" stroke-width="0.6"/><circle cx="9" cy="9.8" r="2.7" fill="url(#gLens)"/><rect x="3.2" y="5.5" width="1.5" height="1.3" fill="#f01818"/><rect x="11" y="5.4" width="2" height="1.2" fill="#223"/></g></symbol><symbol id="i-mesh_data_t" viewBox="0 0 16 16"><path d="M3 3H13L8 13Z" fill="none" stroke="#8c8c8c" stroke-width="1.2" stroke-linejoin="round"/><g fill="#e8e8e8" stroke="#3a3a3a" stroke-width="0.6"><rect x="1.8" y="1.8" width="2.4" height="2.4"/><rect x="11.8" y="1.8" width="2.4" height="2.4"/><rect x="6.8" y="11.8" width="2.4" height="2.4"/></g></symbol><symbol id="i-object_dim" viewBox="0 0 16 16"><path d="M8 1L14.4 4V11.4L8 15L1.6 11.4V4Z" fill="#c48c54" stroke="#3a2410" stroke-width="0.9" stroke-linejoin="round"/><path d="M8 7.2L14.4 4V11.4L8 15Z" fill="#9c6834"/><path d="M8 1L14.4 4L8 7.2L1.6 4Z" fill="#d8b088"/><path d="M1.9 4.2L8 7.2L14.1 4.2M8 7.2V14.6" fill="none" stroke="#d8d0c8" stroke-width="0.8"/></symbol></defs></svg><div class="a" style="left:0px;top:0px;width:1920px;height:26px;background:#6a6a6a;"></div>
<div class="a" style="left:0px;top:0px;width:1920px;height:1px;background:#8c8c8c;"></div>
<div class="a" style="left:0px;top:1px;width:1920px;height:1px;background:#787878;"></div>
<div class="a" style="left:0px;top:25px;width:1920px;height:1px;background:#585858;"></div>
<div class="a" style="left:0px;top:26px;width:1920px;height:1px;background:#0c0c0c;"></div>
<div class="b menu" style="left:8px;top:4px;width:30px;height:20px;border-radius:4px 4px 4px 4px;"></div>
<svg class="a" style="left:12px;top:6px;" width="16" height="16" viewBox="0 0 16 16"><use href="#i-info"/></svg>
<svg class="a" style="left:28px;top:7px" width="7" height="14" viewBox="0 0 7 14"><path d="M3.5 0.3 L6.3 5.9 L0.7 5.9Z M3.5 13.6 L6.3 8.1 L0.7 8.1Z" fill="#b4b4b4"/></svg>
<div class="t " style="left:50px;top:9px;letter-spacing:-0.105px;">File</div>
<div class="t " style="left:88px;top:9px;letter-spacing:-0.69px;">Render</div>
<div class="t " style="left:144px;top:9px;letter-spacing:-0.732px;">Window</div>
<div class="t " style="left:203px;top:9px;letter-spacing:-0.52px;">Help</div>
<div class="b menu" style="left:239px;top:4px;width:33px;height:20px;border-radius:4px 0px 0px 4px;"></div>
<svg class="a" style="left:243px;top:6px;" width="16" height="16" viewBox="0 0 16 16"><use href="#i-screen"/></svg>
<svg class="a" style="left:261px;top:7px" width="7" height="14" viewBox="0 0 7 14"><path d="M3.5 0.3 L6.3 5.9 L0.7 5.9Z M3.5 13.6 L6.3 8.1 L0.7 8.1Z" fill="#b4b4b4"/></svg>
<div class="b txt" style="left:271px;top:4px;width:120px;height:20px;border-radius:0px 0px 0px 0px;"></div>
<div class="t " style="left:278px;top:9px;letter-spacing:-0.598px;">Default</div>
<div class="b tool" style="left:390px;top:4px;width:21px;height:20px;border-radius:0px 0px 0px 0px;"></div>
<svg class="a" style="left:392px;top:6px;" width="16" height="16" viewBox="0 0 16 16"><use href="#i-plus"/></svg>
<div class="b tool" style="left:410px;top:4px;width:20px;height:20px;border-radius:0px 4px 4px 0px;"></div>
<svg class="a" style="left:412px;top:6px;" width="16" height="16" viewBox="0 0 16 16"><use href="#i-x"/></svg>
<div class="b menu" style="left:436px;top:4px;width:32px;height:20px;border-radius:4px 0px 0px 4px;"></div>
<svg class="a" style="left:440px;top:6px;" width="16" height="16" viewBox="0 0 16 16"><use href="#i-scene"/></svg>
<svg class="a" style="left:458px;top:7px" width="7" height="14" viewBox="0 0 7 14"><path d="M3.5 0.3 L6.3 5.9 L0.7 5.9Z M3.5 13.6 L6.3 8.1 L0.7 8.1Z" fill="#b4b4b4"/></svg>
<div class="b txt" style="left:467px;top:4px;width:121px;height:20px;border-radius:0px 0px 0px 0px;"></div>
<div class="t " style="left:475px;top:9px;letter-spacing:-0.706px;">Scene</div>
<div class="b tool" style="left:587px;top:4px;width:21px;height:20px;border-radius:0px 0px 0px 0px;"></div>
<svg class="a" style="left:589px;top:6px;" width="16" height="16" viewBox="0 0 16 16"><use href="#i-plus"/></svg>
<div class="b tool" style="left:607px;top:4px;width:20px;height:20px;border-radius:0px 4px 4px 0px;"></div>
<svg class="a" style="left:609px;top:6px;" width="16" height="16" viewBox="0 0 16 16"><use href="#i-x"/></svg>
<div class="b menu" style="left:644px;top:4px;width:111px;height:20px;border-radius:4px 4px 4px 4px;"></div>
<div class="t " style="left:652px;top:9px;letter-spacing:-0.661px;color:#fff;">Blender Render</div>
<svg class="a" style="left:745px;top:7px" width="7" height="14" viewBox="0 0 7 14"><path d="M3.5 0.3 L6.3 5.9 L0.7 5.9Z M3.5 13.6 L6.3 8.1 L0.7 8.1Z" fill="#b4b4b4"/></svg>
<svg class="a" style="left:773px;top:6px;" width="16" height="16" viewBox="0 0 16 16"><use href="#i-blender"/></svg>
<div class="t " style="left:799px;top:9px;letter-spacing:-0.428px;">v2.72 | Verts:0/53 | Edges:0/100 | Faces:0/48 | Tris:96 | Mem:9.22M | Cube</div>
<div class="a" style="left:0px;top:27px;width:159px;height:927px;background:#727272;"></div>
<div class="a" style="left:0px;top:27px;width:157px;height:1px;background:#858585;"></div>
<div class="a" style="left:0px;top:28px;width:157px;height:1px;background:#7b7b7b;"></div>
<div class="a" style="left:0px;top:27px;width:2px;height:711px;background:#686868;"></div>
<div class="a" style="left:2px;top:27px;width:17px;height:711px;background:#404040;"></div>
<div class="a" style="left:19px;top:27px;width:1px;height:711px;background:#7a7a7a;"></div>
<div class="a" style="left:3px;top:33px;width:17px;height:35px;background:#727272;border-radius:4px 0 0 4px;border:1px solid #808080;border-right:none"></div>
<div class="t" style="left:-39px;top:44.0px;width:100px;text-align:center;transform:rotate(-90deg);letter-spacing:-0.222px">Tools</div>
<div class="a" style="left:3px;top:75px;width:16px;height:43px;background:#535353;border-radius:4px 0 0 4px;border:1px solid #4c4c4c;border-right:none"></div>
<div class="t" style="left:-39px;top:90.0px;width:100px;text-align:center;transform:rotate(-90deg);letter-spacing:-0.591px">Create</div>
<div class="a" style="left:3px;top:124px;width:16px;height:76px;background:#535353;border-radius:4px 0 0 4px;border:1px solid #4c4c4c;border-right:none"></div>
<div class="t" style="left:-39px;top:155.5px;width:100px;text-align:center;transform:rotate(-90deg);letter-spacing:-0.669px">Shading / UVs</div>
<div class="a" style="left:3px;top:207px;width:16px;height:49px;background:#535353;border-radius:4px 0 0 4px;border:1px solid #4c4c4c;border-right:none"></div>
<div class="t" style="left:-39px;top:225.0px;width:100px;text-align:center;transform:rotate(-90deg);letter-spacing:-0.636px">Options</div>
<div class="a" style="left:3px;top:262px;width:16px;height:78px;background:#535353;border-radius:4px 0 0 4px;border:1px solid #4c4c4c;border-right:none"></div>
<div class="t" style="left:-39px;top:294.5px;width:100px;text-align:center;transform:rotate(-90deg);letter-spacing:-0.498px">Grease Pencil</div>
<div class="a" style="left:156px;top:27px;width:1px;height:927px;background:#777777;"></div>
<div class="a" style="left:157px;top:27px;width:1px;height:927px;background:#666666;"></div>
<div class="a" style="left:158px;top:27px;width:1px;height:927px;background:#747474;"></div>
<svg class="a" style="left:33px;top:34px" width="9" height="8" viewBox="0 0 9 8"><path d="M0.3 0.5 L8.7 0.5 L4.5 7.8Z" fill="#1a1a1a"/></svg>
<div class="t t12 " style="left:45px;top:32px;letter-spacing:-0.3px;">Transform</div>
<svg class="a" style="left:138px;top:38px" width="12" height="6"><rect x="0" y="0" width="1" height="1" fill="#cfcfcf"/><rect x="1" y="1" width="1" height="1" fill="#4a4a4a" opacity="0.6"/><rect x="0" y="3" width="1" height="1" fill="#cfcfcf"/><rect x="1" y="4" width="1" height="1" fill="#4a4a4a" opacity="0.6"/><rect x="3" y="0" width="1" height="1" fill="#cfcfcf"/><rect x="4" y="1" width="1" height="1" fill="#4a4a4a" opacity="0.6"/><rect x="3" y="3" width="1" height="1" fill="#cfcfcf"/><rect x="4" y="4" width="1" height="1" fill="#4a4a4a" opacity="0.6"/><rect x="6" y="0" width="1" height="1" fill="#cfcfcf"/><rect x="7" y="1" width="1" height="1" fill="#4a4a4a" opacity="0.6"/><rect x="6" y="3" width="1" height="1" fill="#cfcfcf"/><rect x="7" y="4" width="1" height="1" fill="#4a4a4a" opacity="0.6"/><rect x="9" y="0" width="1" height="1" fill="#cfcfcf"/><rect x="10" y="1" width="1" height="1" fill="#4a4a4a" opacity="0.6"/><rect x="9" y="3" width="1" height="1" fill="#cfcfcf"/><rect x="10" y="4" width="1" height="1" fill="#4a4a4a" opacity="0.6"/></svg>
<div class="b tool" style="left:28px;top:59px;width:123px;height:20px;border-radius:4px 4px 0px 0px;"></div>
<div class="t " style="left:36px;top:64px;letter-spacing:-0.438px;">Translate</div>
<div class="b tool" style="left:28px;top:78px;width:123px;height:21px;border-radius:0px 0px 0px 0px;"></div>
<div class="t " style="left:36px;top:83px;letter-spacing:-0.5px;">Rotate</div>
<div class="b tool" style="left:28px;top:98px;width:123px;height:21px;border-radius:0px 0px 0px 0px;"></div>
<div class="t " style="left:36px;top:103px;letter-spacing:-0.519px;">Scale</div>
<div class="b tool" style="left:28px;top:118px;width:123px;height:21px;border-radius:0px 0px 0px 0px;"></div>
<div class="t " style="left:36px;top:123px;letter-spacing:-0.537px;">Shrink/Fatten</div>
<div class="b tool" style="left:28px;top:138px;width:123px;height:21px;border-radius:0px 0px 4px 4px;"></div>
<div class="t " style="left:36px;top:143px;letter-spacing:-0.597px;">Push/Pull</div>
<div class="hl" style="left:25px;top:167px;width:129px"></div>
<svg class="a" style="left:33px;top:174px" width="9" height="8" viewBox="0 0 9 8"><path d="M0.3 0.5 L8.7 0.5 L4.5 7.8Z" fill="#1a1a1a"/></svg>
<div class="t t12 " style="left:45px;top:172px;letter-spacing:-0.198px;">Mesh Tools</div>
<svg class="a" style="left:138px;top:178px" width="12" height="6"><rect x="0" y="0" width="1" height="1" fill="#cfcfcf"/><rect x="1" y="1" width="1" height="1" fill="#4a4a4a" opacity="0.6"/><rect x="0" y="3" width="1" height="1" fill="#cfcfcf"/><rect x="1" y="4" width="1" height="1" fill="#4a4a4a" opacity="0.6"/><rect x="3" y="0" width="1" height="1" fill="#cfcfcf"/><rect x="4" y="1" width="1" height="1" fill="#4a4a4a" opacity="0.6"/><rect x="3" y="3" width="1" height="1" fill="#cfcfcf"/><rect x="4" y="4" width="1" height="1" fill="#4a4a4a" opacity="0.6"/><rect x="6" y="0" width="1" height="1" fill="#cfcfcf"/><rect x="7" y="1" width="1" height="1" fill="#4a4a4a" opacity="0.6"/><rect x="6" y="3" width="1" height="1" fill="#cfcfcf"/><rect x="7" y="4" width="1" height="1" fill="#4a4a4a" opacity="0.6"/><rect x="9" y="0" width="1" height="1" fill="#cfcfcf"/><rect x="10" y="1" width="1" height="1" fill="#4a4a4a" opacity="0.6"/><rect x="9" y="3" width="1" height="1" fill="#cfcfcf"/><rect x="10" y="4" width="1" height="1" fill="#4a4a4a" opacity="0.6"/></svg>
<div class="t " style="left:36px;top:204px;letter-spacing:-0.656px;">Deform:</div>
<div class="b tool" style="left:28px;top:219px;width:61px;height:20px;border-radius:4px 0px 0px 0px;"></div>
<div class="b tool" style="left:88px;top:219px;width:63px;height:20px;border-radius:0px 4px 0px 0px;"></div>
<div class="t " style="left:36px;top:224px;letter-spacing:-0.698px;">Slide Edg</div>
<div class="t " style="left:96px;top:224px;letter-spacing:-0.393px;">Vertex</div>
<div class="b tool" style="left:28px;top:238px;width:123px;height:21px;border-radius:0px 0px 0px 0px;"></div>
<div class="t " style="left:36px;top:243px;letter-spacing:-0.506px;">Noise</div>
<div class="b tool" style="left:28px;top:258px;width:123px;height:21px;border-radius:0px 0px 0px 0px;"></div>
<div class="t " style="left:36px;top:263px;letter-spacing:-0.562px;">Smooth Vertex</div>
<div class="b tool" style="left:28px;top:278px;width:123px;height:21px;border-radius:0px 0px 4px 4px;"></div>
<div class="t " style="left:36px;top:283px;letter-spacing:-0.684px;">Randomize</div>
<div class="t " style="left:36px;top:309px;letter-spacing:-0.754px;">Add:</div>
<div class="b menu" style="left:28px;top:324px;width:123px;height:20px;border-radius:4px 4px 0px 0px;"></div>
<div class="t " style="left:36px;top:329px;letter-spacing:-0.717px;color:#fff;">Extrude</div>
<svg class="a" style="left:141px;top:327px" width="7" height="14" viewBox="0 0 7 14"><path d="M3.5 0.3 L6.3 5.9 L0.7 5.9Z M3.5 13.6 L6.3 8.1 L0.7 8.1Z" fill="#b4b4b4"/></svg>
<div class="b tool" style="left:28px;top:343px;width:123px;height:21px;border-radius:0px 0px 0px 0px;"></div>
<div class="t " style="left:36px;top:348px;letter-spacing:-0.655px;">Extrude Region</div>
<div class="b tool" style="left:28px;top:363px;width:123px;height:21px;border-radius:0px 0px 0px 0px;"></div>
<div class="t " style="left:36px;top:368px;letter-spacing:-0.617px;">Extrude Individual</div>
<div class="b tool" style="left:28px;top:383px;width:123px;height:21px;border-radius:0px 0px 0px 0px;"></div>
<div class="t " style="left:36px;top:388px;letter-spacing:-0.701px;">Subdivide</div>
<div class="b tool" style="left:28px;top:403px;width:123px;height:21px;border-radius:0px 0px 0px 0px;"></div>
<div class="t " style="left:36px;top:408px;letter-spacing:-0.634px;">Loop Cut and Slide</div>
<div class="b tool" style="left:28px;top:423px;width:123px;height:21px;border-radius:0px 0px 0px 0px;"></div>
<div class="t " style="left:36px;top:428px;letter-spacing:-0.49px;">Duplicate</div>
<div class="b tool" style="left:28px;top:443px;width:61px;height:21px;border-radius:0px 0px 0px 0px;"></div>
<div class="b tool" style="left:88px;top:443px;width:63px;height:21px;border-radius:0px 0px 0px 0px;"></div>
<div class="t " style="left:36px;top:448px;letter-spacing:-0.75px;">Spin</div>
<div class="t " style="left:96px;top:448px;letter-spacing:-0.616px;">Screw</div>
<div class="b tool" style="left:28px;top:463px;width:61px;height:21px;border-radius:0px 0px 0px 0px;"></div>
<div class="b tool" style="left:88px;top:463px;width:63px;height:21px;border-radius:0px 0px 0px 0px;"></div>
<div class="t " style="left:36px;top:468px;letter-spacing:-0.578px;">Knife</div>
<div class="t " style="left:96px;top:468px;letter-spacing:-0.49px;">Select</div>
<div class="b tool" style="left:28px;top:483px;width:123px;height:21px;border-radius:0px 0px 0px 0px;"></div>
<div class="t " style="left:36px;top:488px;letter-spacing:-0.465px;">Knife Project</div>
<div class="b tool" style="left:28px;top:503px;width:123px;height:21px;border-radius:0px 0px 4px 4px;"></div>
<div class="t " style="left:36px;top:508px;letter-spacing:-0.411px;">Bisect</div>
<div class="t " style="left:36px;top:534px;letter-spacing:-0.621px;">Remove:</div>
<div class="b menu" style="left:28px;top:549px;width:123px;height:20px;border-radius:4px 4px 0px 0px;"></div>
<div class="t " style="left:36px;top:554px;letter-spacing:-0.523px;color:#fff;">Delete</div>
<svg class="a" style="left:141px;top:552px" width="7" height="14" viewBox="0 0 7 14"><path d="M3.5 0.3 L6.3 5.9 L0.7 5.9Z M3.5 13.6 L6.3 8.1 L0.7 8.1Z" fill="#b4b4b4"/></svg>
<div class="b menu" style="left:28px;top:568px;width:123px;height:21px;border-radius:0px 0px 0px 0px;"></div>
<div class="t " style="left:36px;top:573px;letter-spacing:-0.666px;color:#fff;">Merge</div>
<svg class="a" style="left:141px;top:571px" width="7" height="14" viewBox="0 0 7 14"><path d="M3.5 0.3 L6.3 5.9 L0.7 5.9Z M3.5 13.6 L6.3 8.1 L0.7 8.1Z" fill="#b4b4b4"/></svg>
<div class="b tool" style="left:28px;top:588px;width:123px;height:21px;border-radius:0px 0px 4px 4px;"></div>
<div class="t " style="left:36px;top:593px;letter-spacing:-0.633px;">Remove Doubles</div>
<div class="hl" style="left:25px;top:617px;width:129px"></div>
<svg class="a" style="left:33px;top:624px" width="8" height="9" viewBox="0 0 8 9"><path d="M0.5 0.3 L0.5 8.7 L7.8 4.5Z" fill="#1a1a1a"/></svg>
<div class="t t12 " style="left:45px;top:622px;letter-spacing:-0.266px;">Weight Tools</div>
<svg class="a" style="left:138px;top:628px" width="12" height="6"><rect x="0" y="0" width="1" height="1" fill="#cfcfcf"/><rect x="1" y="1" width="1" height="1" fill="#4a4a4a" opacity="0.6"/><rect x="0" y="3" width="1" height="1" fill="#cfcfcf"/><rect x="1" y="4" width="1" height="1" fill="#4a4a4a" opacity="0.6"/><rect x="3" y="0" width="1" height="1" fill="#cfcfcf"/><rect x="4" y="1" width="1" height="1" fill="#4a4a4a" opacity="0.6"/><rect x="3" y="3" width="1" height="1" fill="#cfcfcf"/><rect x="4" y="4" width="1" height="1" fill="#4a4a4a" opacity="0.6"/><rect x="6" y="0" width="1" height="1" fill="#cfcfcf"/><rect x="7" y="1" width="1" height="1" fill="#4a4a4a" opacity="0.6"/><rect x="6" y="3" width="1" height="1" fill="#cfcfcf"/><rect x="7" y="4" width="1" height="1" fill="#4a4a4a" opacity="0.6"/><rect x="9" y="0" width="1" height="1" fill="#cfcfcf"/><rect x="10" y="1" width="1" height="1" fill="#4a4a4a" opacity="0.6"/><rect x="9" y="3" width="1" height="1" fill="#cfcfcf"/><rect x="10" y="4" width="1" height="1" fill="#4a4a4a" opacity="0.6"/></svg>
<div class="hl" style="left:25px;top:641px;width:129px"></div>
<svg class="a" style="left:33px;top:648px" width="8" height="9" viewBox="0 0 8 9"><path d="M0.5 0.3 L0.5 8.7 L7.8 4.5Z" fill="#1a1a1a"/></svg>
<div class="t t12 " style="left:45px;top:646px;letter-spacing:-0.386px;">History</div>
<svg class="a" style="left:138px;top:652px" width="12" height="6"><rect x="0" y="0" width="1" height="1" fill="#cfcfcf"/><rect x="1" y="1" width="1" height="1" fill="#4a4a4a" opacity="0.6"/><rect x="0" y="3" width="1" height="1" fill="#cfcfcf"/><rect x="1" y="4" width="1" height="1" fill="#4a4a4a" opacity="0.6"/><rect x="3" y="0" width="1" height="1" fill="#cfcfcf"/><rect x="4" y="1" width="1" height="1" fill="#4a4a4a" opacity="0.6"/><rect x="3" y="3" width="1" height="1" fill="#cfcfcf"/><rect x="4" y="4" width="1" height="1" fill="#4a4a4a" opacity="0.6"/><rect x="6" y="0" width="1" height="1" fill="#cfcfcf"/><rect x="7" y="1" width="1" height="1" fill="#4a4a4a" opacity="0.6"/><rect x="6" y="3" width="1" height="1" fill="#cfcfcf"/><rect x="7" y="4" width="1" height="1" fill="#4a4a4a" opacity="0.6"/><rect x="9" y="0" width="1" height="1" fill="#cfcfcf"/><rect x="10" y="1" width="1" height="1" fill="#4a4a4a" opacity="0.6"/><rect x="9" y="3" width="1" height="1" fill="#cfcfcf"/><rect x="10" y="4" width="1" height="1" fill="#4a4a4a" opacity="0.6"/></svg>
<div class="a" style="left:0px;top:737px;width:158px;height:1px;background:#5e5e5e;"></div>
<div class="a" style="left:0px;top:738px;width:158px;height:1px;background:#858585;"></div>
<div class="a" style="left:2px;top:739px;width:155px;height:215px;background:#727272;"></div>
<svg class="a" style="left:13px;top:746px" width="9" height="8" viewBox="0 0 9 8"><path d="M0.3 0.5 L8.7 0.5 L4.5 7.8Z" fill="#1a1a1a"/></svg>
<div class="t t12 " style="left:24px;top:744px;letter-spacing:-0.452px;">(De)select All</div>
<svg class="a" style="left:137px;top:750px" width="12" height="6"><rect x="0" y="0" width="1" height="1" fill="#cfcfcf"/><rect x="1" y="1" width="1" height="1" fill="#4a4a4a" opacity="0.6"/><rect x="0" y="3" width="1" height="1" fill="#cfcfcf"/><rect x="1" y="4" width="1" height="1" fill="#4a4a4a" opacity="0.6"/><rect x="3" y="0" width="1" height="1" fill="#cfcfcf"/><rect x="4" y="1" width="1" height="1" fill="#4a4a4a" opacity="0.6"/><rect x="3" y="3" width="1" height="1" fill="#cfcfcf"/><rect x="4" y="4" width="1" height="1" fill="#4a4a4a" opacity="0.6"/><rect x="6" y="0" width="1" height="1" fill="#cfcfcf"/><rect x="7" y="1" width="1" height="1" fill="#4a4a4a" opacity="0.6"/><rect x="6" y="3" width="1" height="1" fill="#cfcfcf"/><rect x="7" y="4" width="1" height="1" fill="#4a4a4a" opacity="0.6"/><rect x="9" y="0" width="1" height="1" fill="#cfcfcf"/><rect x="10" y="1" width="1" height="1" fill="#4a4a4a" opacity="0.6"/><rect x="9" y="3" width="1" height="1" fill="#cfcfcf"/><rect x="10" y="4" width="1" height="1" fill="#4a4a4a" opacity="0.6"/></svg>
<div class="t " style="left:14px;top:775px;letter-spacing:-0.411px;">Action</div>
<div class="b menu" style="left:7px;top:790px;width:143px;height:20px;border-radius:4px 4px 4px 4px;"></div>
<div class="t " style="left:14px;top:795px;letter-spacing:-0.396px;color:#fff;">Toggle</div>
<svg class="a" style="left:140px;top:793px" width="7" height="14" viewBox="0 0 7 14"><path d="M3.5 0.3 L6.3 5.9 L0.7 5.9Z M3.5 13.6 L6.3 8.1 L0.7 8.1Z" fill="#b4b4b4"/></svg>
<svg class="a" style="left:159px;top:27px" width="1506" height="927" viewBox="159 27 1506 927" shape-rendering="crispEdges"><rect x="159" y="27" width="1506" height="927" fill="#393939"/><path d="M292.2 510.0L956.4 766.6M328.2 491.5L992.4 748.2M364.1 473.0L1028.3 729.7M400.1 454.6L1064.3 711.2M436.1 436.1L1100.2 692.7M472.0 417.6L1136.2 674.2M508.0 399.1L1172.1 655.8M543.9 380.6L1208.1 637.3M615.8 343.7L1280.0 600.3M651.8 325.2L1315.9 581.8M687.7 306.7L1351.9 563.4M723.7 288.2L1387.8 544.9M759.6 269.8L1423.8 526.4M795.6 251.3L1459.7 507.9M831.5 232.8L1495.7 489.4M867.5 214.3L1531.6 471.0M292.2 510.0L867.5 214.3M333.8 526.0L909.0 230.4M375.3 542.1L950.5 246.4M416.8 558.1L992.0 262.4M458.3 574.2L1033.5 278.5M499.8 590.2L1075.0 294.5M541.3 606.2L1116.5 310.6M582.8 622.3L1158.0 326.6M665.8 654.4L1241.0 358.7M707.3 670.4L1282.5 374.7M748.9 686.4L1324.1 390.8M790.4 702.5L1365.6 406.8M831.9 718.5L1407.1 422.8M873.4 734.6L1448.6 438.9M914.9 750.6L1490.1 454.9M956.4 766.6L1531.6 471.0" stroke="#4b4b4b" stroke-width="1" fill="none"/><path d="M579.9 362.2L1244.0 618.8" stroke="#8c1e1e" stroke-width="1"/><path d="M624.3 638.3L1199.5 342.6" stroke="#1e8c1e" stroke-width="1"/><path d="M1117.5 254V512" stroke="#4a4a4a" stroke-width="1"/><circle cx="1117.4" cy="246.4" r="3.4" fill="#000"/><circle cx="1117.4" cy="246.4" r="8.6" fill="none" stroke="#000" stroke-width="1.2" stroke-dasharray="3 3.75"/><circle cx="1117.4" cy="246.4" r="12" fill="none" stroke="#000" stroke-width="1.2" stroke-dasharray="3 6.42"/><polygon points="644.9,364.5 662.5,371.3 684.2,388.2 766.8,403.8 870.0,442.6 973.7,484.0 974.2,545.0 930.0,552.0 890.0,556.0 878.9,588.0 848.1,680.9 848.1,779.4 807.1,763.8 807.1,661.9 849.7,535.0 849.7,484.6 765.4,452.5 684.2,404.9 667.9,404.9 663.9,405.8 644.9,399.0" fill="#8e8e8e"/><polygon points="890.0,556.0 878.9,588.0 848.1,680.9 890.0,660.7 906.7,611.7 900.6,588.0 893.0,560.0" fill="#888cab"/><polygon points="848.1,680.9 890.0,660.7 890.0,757.7 848.1,779.4" fill="#73758e"/><polygon points="644.9,364.5 686.9,343.1 705.8,350.3 724.8,366.3 684.2,388.2 662.5,371.3" fill="#a1a1b3"/><polygon points="684.2,388.2 724.8,366.3 807.4,382.1 766.8,403.8" fill="#9999a8"/><polygon points="766.8,403.8 807.4,382.1 870.0,406.0 989.0,450.0 973.7,484.0 870.0,442.6" fill="#9fa0b2"/><polygon points="890.4,550.0 934.6,714.8 934.6,812.5 975.3,829.5 975.3,730.4 928.0,550.0" fill="#8a8a8a"/><polygon points="928.0,550.0 975.3,730.4 996.2,719.5 1017.6,709.6 974.2,545.0" fill="#4f5062"/><polygon points="975.3,730.4 996.2,719.5 1017.6,709.6 1017.6,807.5 996.2,818.4 975.3,829.5" fill="#70728a"/><polygon points="973.7,484.0 1015.4,500.3 1098.6,548.1 1119.3,547.5 1137.6,554.4 1137.6,588.7 1119.3,581.5 1098.7,565.6 1015.4,549.3 973.7,533.5" fill="#8b8b8b"/><polygon points="1137.6,554.4 1158.3,543.3 1179.6,533.1 1179.6,567.4 1158.3,578.5 1137.6,588.7" fill="#6f718a"/><polygon points="973.0,446.0 989.0,450.0 1057.4,478.5 1140.1,526.3 1119.5,536.8 1098.6,548.1 1015.4,500.3 973.7,484.0" fill="#9c9dae"/><polygon points="1098.6,548.1 1119.5,536.8 1140.1,526.3 1160.5,526.2 1140.1,536.4 1119.3,547.5" fill="#9293a1"/><polygon points="1119.3,547.5 1140.1,536.4 1160.5,526.2 1179.6,533.1 1158.3,543.3 1137.6,554.4" fill="#9b9cad"/><polygon points="981.4,430.2 971.7,450 1002.1,450" fill="#000"/><path d="M955.4 451.4H1009.6L1010.3 482L955.4 483.6ZM955.4 451.4L1010.3 482M1009.6 451.4L955.4 483.6" stroke="#000" stroke-width="1" fill="none"/><path d="M989.0 450.0L1057.4 478.5L1140.1 526.3L1160.5 526.2L1179.6 533.1L1179.6 567.4L1158.3 578.5L1137.6 588.7L1119.3 581.5L1098.7 565.6L1015.4 549.3L973.7 533.5M973.7 484.0L1015.4 500.3L1098.6 548.1L1119.3 547.5L1137.6 554.4L1137.6 588.7M1015.4 500.3L1015.4 549.3M1098.6 548.1L1098.7 565.6M1119.3 547.5L1119.3 581.5M1158.3 543.3L1158.3 578.5M1137.6 554.4L1158.3 543.3L1179.6 533.1M1015.4 500.3L1036.7 489.5L1057.4 478.5M980.0 462.0L1036.7 489.5L1119.5 536.8L1140.1 536.4L1158.3 543.3M1098.6 548.1L1119.5 536.8L1140.1 526.3M1119.3 547.5L1140.1 536.4L1160.5 526.2M974.2 484.0L974.2 545.0M900.6 588.0L934.6 714.8L934.6 812.5L975.3 829.5L996.2 818.4L1017.6 807.5L1017.6 709.6L974.2 545.0M938.1 588.0L975.3 730.4L975.3 829.5M962.2 588.0L996.2 719.5L996.2 818.4M934.6 714.8L975.3 730.4L996.2 719.5L1017.6 709.6" stroke="#000" stroke-width="1.15" fill="none" stroke-linejoin="round"/><path d="M925.2 588.0L955.0 703.5L955.0 802.1M948.3 588.0L975.7 692.7L975.7 791.6M934.6 714.8L955.0 703.5L975.7 692.7L1017.6 709.6M934.6 812.5L955.0 802.1L975.7 791.6L1017.6 807.5M955.0 802.1L996.2 818.4M1057.4 478.5L1057.4 527.6L1015.4 549.3M1057.4 527.6L1140.5 570.8L1160.5 560.0L1179.6 567.4M1140.1 526.3L1140.5 570.8L1119.3 581.5M1160.5 526.2L1160.5 560.0L1137.6 571.0M974.2 497.0L1057.4 520.0L1140.5 560.0M974.2 510.0L1015.4 525.0L1098.7 557.0" stroke="#000" stroke-width="0.8" fill="none" opacity="0.45"/><rect x="1055.9" y="477.0" width="3" height="3" fill="#000"/><rect x="1138.6" y="524.8" width="3" height="3" fill="#000"/><rect x="1159.0" y="524.7" width="3" height="3" fill="#000"/><rect x="1178.1" y="531.6" width="3" height="3" fill="#000"/><rect x="1178.1" y="565.9" width="3" height="3" fill="#000"/><rect x="1156.8" y="577.0" width="3" height="3" fill="#000"/><rect x="1136.1" y="587.2" width="3" height="3" fill="#000"/><rect x="1117.8" y="580.0" width="3" height="3" fill="#000"/><rect x="1097.2" y="564.1" width="3" height="3" fill="#000"/><rect x="1013.9" y="547.8" width="3" height="3" fill="#000"/><rect x="1013.9" y="498.8" width="3" height="3" fill="#000"/><rect x="1097.1" y="546.6" width="3" height="3" fill="#000"/><rect x="1117.8" y="546.0" width="3" height="3" fill="#000"/><rect x="1136.1" y="552.9" width="3" height="3" fill="#000"/><rect x="1156.8" y="541.8" width="3" height="3" fill="#000"/><rect x="1035.2" y="488.0" width="3" height="3" fill="#000"/><rect x="1118.0" y="535.3" width="3" height="3" fill="#000"/><rect x="1138.6" y="534.9" width="3" height="3" fill="#000"/><rect x="972.7" y="543.5" width="3" height="3" fill="#000"/><rect x="933.1" y="713.3" width="3" height="3" fill="#000"/><rect x="933.1" y="811.0" width="3" height="3" fill="#000"/><rect x="973.8" y="828.0" width="3" height="3" fill="#000"/><rect x="994.7" y="816.9" width="3" height="3" fill="#000"/><rect x="1016.1" y="806.0" width="3" height="3" fill="#000"/><rect x="1016.1" y="708.1" width="3" height="3" fill="#000"/><rect x="973.8" y="728.9" width="3" height="3" fill="#000"/><rect x="994.7" y="718.0" width="3" height="3" fill="#000"/><circle cx="912" cy="493" r="8.5" fill="none" stroke="#e02020" stroke-width="1" stroke-dasharray="3 3"/><circle cx="912" cy="493" r="8.5" fill="none" stroke="#fff" stroke-width="1" stroke-dasharray="3 3" stroke-dashoffset="3"/><path d="M912 479V488M912 498V507M898 493H907M917 493H926" stroke="#000" stroke-width="1"/><path d="M185 928.2L203.75 935" stroke="#dc0000" stroke-width="2"/><path d="M185 928.2L200.8 919.6" stroke="#00c800" stroke-width="2"/><path d="M185 928.5V906.3" stroke="#0000e6" stroke-width="2"/></svg>
<div class="a" style="left:159px;top:27px;width:1506px;height:1px;background:#525252;"></div>
<div class="a" style="left:159px;top:28px;width:1506px;height:1px;background:#444444;"></div>
<div class="a" style="left:159px;top:29px;width:1px;height:924px;background:#444444;"></div>
<div class="t " style="left:179px;top:39px;letter-spacing:-0.575px;color:#fff;">User Ortho</div>
<div class="t " style="left:229px;top:934px;letter-spacing:-0.562px;color:#fff;">(1) Cube</div>
<div class="t " style="left:187px;top:893px;letter-spacing:-0.781px;color:#0000e6;">z</div>
<div class="t " style="left:204px;top:907px;letter-spacing:-0.516px;color:#00c800;">y</div>
<div class="t " style="left:206px;top:923px;letter-spacing:-0.516px;color:#dc0000;">x</div>
<svg class="a" style="left:1652px;top:28px" width="13" height="13"><path d="M1 0L13 12M4 0L13 9M7 0L13 6M10 0L13 3" stroke="#b0b0b0" stroke-width="1"/><path d="M2.5 0L13 10.5M5.5 0L13 7.5M8.5 0L13 4.5M11.5 0L13 1.5" stroke="#1c1c1c" stroke-width="1"/></svg>
<div class="a" style="left:1649px;top:50px;width:14px;height:14px;background:#2e2e2e;border-radius:3px"></div>
<svg class="a" style="left:1652px;top:53px" width="8" height="8"><path d="M4 0.5V7.5M0.5 4H7.5" stroke="#8a8a8a" stroke-width="1.6"/></svg>
<div class="a" style="left:871px;top:341px;width:102px;height:247px;background:rgba(25,25,25,0.9);border-radius:4px;box-shadow:0 2px 9px 3px rgba(0,0,0,0.42)"></div>
<div class="t " style="left:879px;top:351px;letter-spacing:-0.738px;color:#a0a0a0;">Mesh</div>
<div class="a" style="left:872px;top:372px;width:100px;height:1px;background:#3a3a3a;"></div>
<svg class="a" style="left:878px;top:378px;" width="16" height="16" viewBox="0 0 16 16"><use href="#i-plane"/></svg>
<div class="t " style="left:901px;top:380px;letter-spacing:-0.634px;color:#f0f0f0;"><span style="text-decoration:underline;text-underline-offset:2px">P</span>lane</div>
<svg class="a" style="left:878px;top:398px;" width="16" height="16" viewBox="0 0 16 16"><use href="#i-mcube"/></svg>
<div class="t " style="left:901px;top:400px;letter-spacing:-0.852px;color:#f0f0f0;"><span style="text-decoration:underline;text-underline-offset:2px">C</span>ube</div>
<svg class="a" style="left:878px;top:418px;" width="16" height="16" viewBox="0 0 16 16"><use href="#i-circle"/></svg>
<div class="t " style="left:901px;top:420px;letter-spacing:-0.318px;color:#f0f0f0;">Ci<span style="text-decoration:underline;text-underline-offset:2px">r</span>cle</div>
<div class="a" style="left:872px;top:436.5px;width:99px;height:18px;background:linear-gradient(#6f98da,#5680c2)"></div>
<svg class="a" style="left:878px;top:438px;" width="16" height="16" viewBox="0 0 16 16"><use href="#i-uvsphere"/></svg>
<div class="t " style="left:901px;top:440px;letter-spacing:-0.648px;color:#f0f0f0;"><span style="text-decoration:underline;text-underline-offset:2px">U</span>V Sphere</div>
<svg class="a" style="left:878px;top:458px;" width="16" height="16" viewBox="0 0 16 16"><use href="#i-ico"/></svg>
<div class="t " style="left:901px;top:460px;letter-spacing:-0.628px;color:#f0f0f0;"><span style="text-decoration:underline;text-underline-offset:2px">I</span>co Sphere</div>
<svg class="a" style="left:878px;top:478px;" width="16" height="16" viewBox="0 0 16 16"><use href="#i-cyl"/></svg>
<div class="t " style="left:901px;top:480px;letter-spacing:-0.57px;color:#f0f0f0;">C<span style="text-decoration:underline;text-underline-offset:2px">y</span>linder</div>
<svg class="a" style="left:878px;top:498px;" width="16" height="16" viewBox="0 0 16 16"><use href="#i-cone"/></svg>
<div class="t " style="left:901px;top:500px;letter-spacing:-0.789px;color:#f0f0f0;">C<span style="text-decoration:underline;text-underline-offset:2px">o</span>ne</div>
<svg class="a" style="left:878px;top:518px;" width="16" height="16" viewBox="0 0 16 16"><use href="#i-torus"/></svg>
<div class="t " style="left:901px;top:520px;letter-spacing:-0.359px;color:#f0f0f0;"><span style="text-decoration:underline;text-underline-offset:2px">T</span>orus</div>
<svg class="a" style="left:878px;top:547px;" width="16" height="16" viewBox="0 0 16 16"><use href="#i-grid"/></svg>
<div class="t " style="left:901px;top:549px;letter-spacing:-0.523px;color:#f0f0f0;"><span style="text-decoration:underline;text-underline-offset:2px">G</span>rid</div>
<svg class="a" style="left:878px;top:567px;" width="16" height="16" viewBox="0 0 16 16"><use href="#i-monkey"/></svg>
<div class="t " style="left:901px;top:569px;letter-spacing:-0.576px;color:#f0f0f0;"><span style="text-decoration:underline;text-underline-offset:2px">M</span>onkey</div>
<div class="a" style="left:872px;top:540px;width:100px;height:1px;background:#3a3a3a;"></div>
<div class="a" style="left:0px;top:954px;width:1665px;height:26px;background:#727272;"></div>
<div class="a" style="left:0px;top:953px;width:159px;height:1px;background:#666666;"></div>
<div class="a" style="left:159px;top:953px;width:1506px;height:1px;background:#323232;"></div>
<div class="a" style="left:0px;top:954px;width:1665px;height:1px;background:#7b7b7b;"></div>
<div class="a" style="left:0px;top:955px;width:1665px;height:1px;background:#868686;"></div>
<div class="a" style="left:0px;top:980px;width:1665px;height:1px;background:#0c0c0c;"></div>
<div class="b menu" style="left:9px;top:957px;width:30px;height:20px;border-radius:4px 4px 4px 4px;"></div>
<svg class="a" style="left:13px;top:959px;" width="16" height="16" viewBox="0 0 16 16"><use href="#i-view3d"/></svg>
<svg class="a" style="left:29px;top:960px" width="7" height="14" viewBox="0 0 7 14"><path d="M3.5 0.3 L6.3 5.9 L0.7 5.9Z M3.5 13.6 L6.3 8.1 L0.7 8.1Z" fill="#b4b4b4"/></svg>
<div class="t " style="left:52px;top:962px;letter-spacing:-0.531px;">View</div>
<div class="t " style="left:96px;top:962px;letter-spacing:-0.49px;">Select</div>
<div class="t " style="left:147px;top:962px;letter-spacing:-0.771px;">Add</div>
<div class="t " style="left:186px;top:962px;letter-spacing:-0.738px;">Mesh</div>
<div class="b menu" style="left:225px;top:957px;width:99px;height:20px;border-radius:4px 4px 4px 4px;"></div>
<svg class="a" style="left:229px;top:959px;" width="16" height="16" viewBox="0 0 16 16"><use href="#i-editmode"/></svg>
<div class="t " style="left:249px;top:962px;letter-spacing:-0.642px;color:#fff;">Edit Mode</div>
<svg class="a" style="left:314px;top:960px" width="7" height="14" viewBox="0 0 7 14"><path d="M3.5 0.3 L6.3 5.9 L0.7 5.9Z M3.5 13.6 L6.3 8.1 L0.7 8.1Z" fill="#b4b4b4"/></svg>
<div class="b menu" style="left:329px;top:957px;width:35px;height:20px;border-radius:4px 4px 4px 4px;"></div>
<svg class="a" style="left:333px;top:959px;" width="16" height="16" viewBox="0 0 16 16"><use href="#i-solid"/></svg>
<svg class="a" style="left:354px;top:960px" width="7" height="14" viewBox="0 0 7 14"><path d="M3.5 0.3 L6.3 5.9 L0.7 5.9Z M3.5 13.6 L6.3 8.1 L0.7 8.1Z" fill="#b4b4b4"/></svg>
<div class="b menu" style="left:369px;top:957px;width:35px;height:20px;border-radius:4px 4px 4px 4px;"></div>
<svg class="a" style="left:373px;top:959px;" width="16" height="16" viewBox="0 0 16 16"><use href="#i-pivot"/></svg>
<svg class="a" style="left:394px;top:960px" width="7" height="14" viewBox="0 0 7 14"><path d="M3.5 0.3 L6.3 5.9 L0.7 5.9Z M3.5 13.6 L6.3 8.1 L0.7 8.1Z" fill="#b4b4b4"/></svg>
<div class="b togs" style="left:409px;top:957px;width:21px;height:20px;border-radius:4px 0px 0px 4px;"></div>
<svg class="a" style="left:411px;top:959px;" width="16" height="16" viewBox="0 0 16 16"><use href="#i-manip"/></svg>
<div class="b radios" style="left:429px;top:957px;width:21px;height:20px;border-radius:0px 0px 0px 0px;"></div>
<svg class="a" style="left:431px;top:959px;" width="16" height="16" viewBox="0 0 16 16"><use href="#i-m_trans"/></svg>
<div class="b radio" style="left:449px;top:957px;width:21px;height:20px;border-radius:0px 0px 0px 0px;"></div>
<svg class="a" style="left:451px;top:959px;" width="16" height="16" viewBox="0 0 16 16"><use href="#i-m_rot"/></svg>
<div class="b radio" style="left:469px;top:957px;width:21px;height:20px;border-radius:0px 0px 0px 0px;"></div>
<svg class="a" style="left:471px;top:959px;" width="16" height="16" viewBox="0 0 16 16"><use href="#i-m_scale"/></svg>
<div class="b menu" style="left:489px;top:957px;width:72px;height:20px;border-radius:0px 4px 4px 0px;"></div>
<div class="t " style="left:496px;top:962px;letter-spacing:-0.518px;color:#fff;">Global</div>
<svg class="a" style="left:551px;top:960px" width="7" height="14" viewBox="0 0 7 14"><path d="M3.5 0.3 L6.3 5.9 L0.7 5.9Z M3.5 13.6 L6.3 8.1 L0.7 8.1Z" fill="#b4b4b4"/></svg>
<div class="b b togs" style="left:566px;top:957px;width:21px;height:20px;border-radius:4px 0px 0px 4px;"></div>
<svg class="a" style="left:568px;top:959px;" width="16" height="16" viewBox="0 0 16 16"><use href="#i-vertsel"/></svg>
<div class="b b tog" style="left:586px;top:957px;width:21px;height:20px;border-radius:0px 0px 0px 0px;"></div>
<svg class="a" style="left:588px;top:959px;" width="16" height="16" viewBox="0 0 16 16"><use href="#i-edgesel"/></svg>
<div class="b b tog" style="left:606px;top:957px;width:20px;height:20px;border-radius:0px 4px 4px 0px;"></div>
<svg class="a" style="left:608px;top:959px;" width="16" height="16" viewBox="0 0 16 16"><use href="#i-facesel"/></svg>
<div class="b tog" style="left:631px;top:957px;width:20px;height:20px;border-radius:4px 4px 4px 4px;"></div>
<svg class="a" style="left:633px;top:959px;" width="16" height="16" viewBox="0 0 16 16"><use href="#i-limit"/></svg>
<div class="b menu" style="left:656px;top:957px;width:35px;height:20px;border-radius:4px 4px 4px 4px;"></div>
<svg class="a" style="left:660px;top:959px;" width="16" height="16" viewBox="0 0 16 16"><use href="#i-prop"/></svg>
<svg class="a" style="left:681px;top:960px" width="7" height="14" viewBox="0 0 7 14"><path d="M3.5 0.3 L6.3 5.9 L0.7 5.9Z M3.5 13.6 L6.3 8.1 L0.7 8.1Z" fill="#b4b4b4"/></svg>
<div class="b tog" style="left:696px;top:957px;width:21px;height:20px;border-radius:4px 0px 0px 4px;"></div>
<svg class="a" style="left:698px;top:959px;" width="16" height="16" viewBox="0 0 16 16"><use href="#i-magnet"/></svg>
<div class="b menu" style="left:716px;top:957px;width:35px;height:20px;border-radius:0px 4px 4px 0px;"></div>
<svg class="a" style="left:719px;top:959px;" width="16" height="16" viewBox="0 0 16 16"><use href="#i-snapgrid"/></svg>
<svg class="a" style="left:741px;top:960px" width="7" height="14" viewBox="0 0 7 14"><path d="M3.5 0.3 L6.3 5.9 L0.7 5.9Z M3.5 13.6 L6.3 8.1 L0.7 8.1Z" fill="#b4b4b4"/></svg>
<div class="b tog" style="left:756px;top:957px;width:20px;height:20px;border-radius:4px 4px 4px 4px;"></div>
<svg class="a" style="left:758px;top:959px;" width="16" height="16" viewBox="0 0 16 16"><use href="#i-snaptarget"/></svg>
<div class="b tool" style="left:781px;top:957px;width:21px;height:20px;border-radius:4px 0px 0px 4px;"></div>
<svg class="a" style="left:783px;top:959px;" width="16" height="16" viewBox="0 0 16 16"><use href="#i-render_still"/></svg>
<div class="b tool" style="left:801px;top:957px;width:20px;height:20px;border-radius:0px 4px 4px 0px;"></div>
<svg class="a" style="left:803px;top:959px;" width="16" height="16" viewBox="0 0 16 16"><use href="#i-render_anim"/></svg>
<div class="a" style="left:0px;top:981px;width:1665px;height:56px;background:#444444;"></div>
<div class="a" style="left:286px;top:981px;width:1217px;height:56px;background:#737373;"></div>
<div class="a" style="left:0px;top:981px;width:1665px;height:1px;background:rgba(255,255,255,0.1);"></div>
<div class="a" style="left:0px;top:982px;width:1665px;height:1px;background:rgba(255,255,255,0.05);"></div>
<svg class="a" style="left:0;top:981px" width="1665" height="56"><path d="M38.5 0V56M87.5 0V56M136.5 0V56M185.5 0V56M234.5 0V56M282.5 0V56M331.5 0V56M380.5 0V56M429.5 0V56M478.5 0V56M527.5 0V56M575.5 0V56M624.5 0V56M673.5 0V56M722.5 0V56M771.5 0V56M820.5 0V56M868.5 0V56M917.5 0V56M966.5 0V56M1015.5 0V56M1064.5 0V56M1113.5 0V56M1161.5 0V56M1210.5 0V56M1259.5 0V56M1308.5 0V56M1357.5 0V56M1405.5 0V56M1454.5 0V56M1503.5 0V56M1552.5 0V56M1601.5 0V56M1650.5 0V56" stroke="#000" stroke-opacity="0.3" stroke-width="1"/><path d="M14.5 0V56M63.5 0V56M111.5 0V56M160.5 0V56M209.5 0V56M258.5 0V56M307.5 0V56M356.5 0V56M404.5 0V56M453.5 0V56M502.5 0V56M551.5 0V56M600.5 0V56M649.5 0V56M697.5 0V56M746.5 0V56M795.5 0V56M844.5 0V56M893.5 0V56M942.5 0V56M990.5 0V56M1039.5 0V56M1088.5 0V56M1137.5 0V56M1186.5 0V56M1235.5 0V56M1283.5 0V56M1332.5 0V56M1381.5 0V56M1430.5 0V56M1479.5 0V56M1528.5 0V56M1576.5 0V56M1625.5 0V56" stroke="#000" stroke-opacity="0.13" stroke-width="1"/><path d="M282.5 0V56" stroke="#000" stroke-opacity="0.7" stroke-width="1"/><rect x="286" y="0" width="3" height="56" fill="#64c840"/></svg>
<div class="a" style="left:0px;top:1037px;width:1665px;height:18px;background:#727272;"></div>
<div class="a" style="left:4px;top:1037px;width:1656px;height:13px;border-radius:6.5px;border:1px solid #3c3c3c;background:linear-gradient(#909090,#7c7c7c)"></div>
<div class="a" style="left:7px;top:1040px;width:7px;height:7px;border-radius:3.5px;background:#6c6c6c"></div>
<div class="a" style="left:1650px;top:1040px;width:7px;height:7px;border-radius:3.5px;background:#6c6c6c"></div>
<div class="t" style="left:-61px;width:200px;text-align:center;top:1038px;letter-spacing:-0.323px;">-50</div>
<div class="t" style="left:-12px;width:200px;text-align:center;top:1038px;letter-spacing:-0.323px;">-40</div>
<div class="t" style="left:36px;width:200px;text-align:center;top:1038px;letter-spacing:-0.323px;">-30</div>
<div class="t" style="left:85px;width:200px;text-align:center;top:1038px;letter-spacing:-0.323px;">-20</div>
<div class="t" style="left:133px;width:200px;text-align:center;top:1038px;letter-spacing:-0.323px;">-10</div>
<div class="t" style="left:184px;width:200px;text-align:center;top:1038px;letter-spacing:0.0px;">0</div>
<div class="t" style="left:233px;width:200px;text-align:center;top:1038px;letter-spacing:0.0px;">10</div>
<div class="t" style="left:281px;width:200px;text-align:center;top:1038px;letter-spacing:0.0px;">20</div>
<div class="t" style="left:330px;width:200px;text-align:center;top:1038px;letter-spacing:0.0px;">30</div>
<div class="t" style="left:378px;width:200px;text-align:center;top:1038px;letter-spacing:0.0px;">40</div>
<div class="t" style="left:427px;width:200px;text-align:center;top:1038px;letter-spacing:0.0px;">50</div>
<div class="t" style="left:476px;width:200px;text-align:center;top:1038px;letter-spacing:0.0px;">60</div>
<div class="t" style="left:524px;width:200px;text-align:center;top:1038px;letter-spacing:0.0px;">70</div>
<div class="t" style="left:573px;width:200px;text-align:center;top:1038px;letter-spacing:0.0px;">80</div>
<div class="t" style="left:621px;width:200px;text-align:center;top:1038px;letter-spacing:0.0px;">90</div>
<div class="t" style="left:670px;width:200px;text-align:center;top:1038px;letter-spacing:0.0px;">100</div>
<div class="t" style="left:718px;width:200px;text-align:center;top:1038px;letter-spacing:0.0px;">110</div>
<div class="t" style="left:767px;width:200px;text-align:center;top:1038px;letter-spacing:0.0px;">120</div>
<div class="t" style="left:815px;width:200px;text-align:center;top:1038px;letter-spacing:0.0px;">130</div>
<div class="t" style="left:864px;width:200px;text-align:center;top:1038px;letter-spacing:0.0px;">140</div>
<div class="t" style="left:912px;width:200px;text-align:center;top:1038px;letter-spacing:0.0px;">150</div>
<div class="t" style="left:961px;width:200px;text-align:center;top:1038px;letter-spacing:0.0px;">160</div>
<div class="t" style="left:1009px;width:200px;text-align:center;top:1038px;letter-spacing:0.0px;">170</div>
<div class="t" style="left:1058px;width:200px;text-align:center;top:1038px;letter-spacing:0.0px;">180</div>
<div class="t" style="left:1106px;width:200px;text-align:center;top:1038px;letter-spacing:0.0px;">190</div>
<div class="t" style="left:1155px;width:200px;text-align:center;top:1038px;letter-spacing:0.0px;">200</div>
<div class="t" style="left:1203px;width:200px;text-align:center;top:1038px;letter-spacing:0.0px;">210</div>
<div class="t" style="left:1252px;width:200px;text-align:center;top:1038px;letter-spacing:0.0px;">220</div>
<div class="t" style="left:1300px;width:200px;text-align:center;top:1038px;letter-spacing:0.0px;">230</div>
<div class="t" style="left:1349px;width:200px;text-align:center;top:1038px;letter-spacing:0.0px;">240</div>
<div class="t" style="left:1397px;width:200px;text-align:center;top:1038px;letter-spacing:0.0px;">250</div>
<div class="t" style="left:1446px;width:200px;text-align:center;top:1038px;letter-spacing:0.0px;">260</div>
<div class="t" style="left:1494px;width:200px;text-align:center;top:1038px;letter-spacing:0.0px;">270</div>
<div class="t" style="left:1543px;width:200px;text-align:center;top:1038px;letter-spacing:0.0px;">280</div>
<svg class="a" style="left:1652px;top:982px" width="13" height="13"><path d="M1 0L13 12M4 0L13 9M7 0L13 6M10 0L13 3" stroke="#aaa" stroke-width="1"/><path d="M2.5 0L13 10.5M5.5 0L13 7.5M8.5 0L13 4.5" stroke="#222" stroke-width="1"/></svg>
<div class="a" style="left:0px;top:1053px;width:1665px;height:2px;background:#7e7e7e;"></div>
<div class="a" style="left:0px;top:1055px;width:1665px;height:25px;background:#6a6a6a;"></div>
<div class="b menu" style="left:9px;top:1057px;width:30px;height:20px;border-radius:4px 4px 4px 4px;"></div>
<svg class="a" style="left:13px;top:1059px;" width="16" height="16" viewBox="0 0 16 16"><use href="#i-time"/></svg>
<svg class="a" style="left:29px;top:1060px" width="7" height="14" viewBox="0 0 7 14"><path d="M3.5 0.3 L6.3 5.9 L0.7 5.9Z M3.5 13.6 L6.3 8.1 L0.7 8.1Z" fill="#b4b4b4"/></svg>
<div class="t " style="left:52px;top:1062px;letter-spacing:-0.531px;">View</div>
<div class="t " style="left:96px;top:1062px;letter-spacing:-0.5px;">Marker</div>
<div class="t " style="left:151px;top:1062px;letter-spacing:-0.453px;">Frame</div>
<div class="t " style="left:203px;top:1062px;letter-spacing:-0.512px;">Playback</div>
<div class="b tog" style="left:261px;top:1057px;width:21px;height:20px;border-radius:4px 0px 0px 4px;"></div>
<svg class="a" style="left:263px;top:1059px;" width="16" height="16" viewBox="0 0 16 16"><use href="#i-preview_range"/></svg>
<div class="b tog" style="left:281px;top:1057px;width:20px;height:20px;border-radius:0px 4px 4px 0px;"></div>
<svg class="a" style="left:283px;top:1059px;" width="16" height="16" viewBox="0 0 16 16"><use href="#i-lock"/></svg>
<div class="b num" style="left:307px;top:1057px;width:117px;height:20px;border-radius:10px 0px 0px 10px;"></div>
<svg class="a" style="left:313px;top:1063px" width="5" height="8"><path d="M4.5 0.5L0.5 4L4.5 7.5Z" fill="#6a6a6a"/></svg>
<svg class="a" style="left:413px;top:1063px" width="5" height="8"><path d="M0.5 0.5L4.5 4L0.5 7.5Z" fill="#5a5a5a"/></svg>
<div class="t " style="left:322px;top:1062px;letter-spacing:-0.594px;">Start:</div>
<div class="t" style="left:208px;width:200px;text-align:right;top:1062px;letter-spacing:0.0px;">1</div>
<div class="b num" style="left:423px;top:1057px;width:110px;height:20px;border-radius:0px 10px 10px 0px;"></div>
<svg class="a" style="left:429px;top:1063px" width="5" height="8"><path d="M4.5 0.5L0.5 4L4.5 7.5Z" fill="#6a6a6a"/></svg>
<svg class="a" style="left:522px;top:1063px" width="5" height="8"><path d="M0.5 0.5L4.5 4L0.5 7.5Z" fill="#5a5a5a"/></svg>
<div class="t " style="left:438px;top:1062px;letter-spacing:-0.902px;">End:</div>
<div class="t" style="left:317px;width:200px;text-align:right;top:1062px;letter-spacing:0.0px;">250</div>
<div class="b num" style="left:540px;top:1057px;width:89px;height:20px;border-radius:10px 10px 10px 10px;"></div>
<svg class="a" style="left:546px;top:1063px" width="5" height="8"><path d="M4.5 0.5L0.5 4L4.5 7.5Z" fill="#6a6a6a"/></svg>
<svg class="a" style="left:618px;top:1063px" width="5" height="8"><path d="M0.5 0.5L4.5 4L0.5 7.5Z" fill="#5a5a5a"/></svg>
<div class="t" style="left:413px;width:200px;text-align:right;top:1062px;letter-spacing:0.0px;">1</div>
<div class="b tool" style="left:645px;top:1057px;width:21px;height:20px;border-radius:4px 0px 0px 4px;"></div>
<svg class="a" style="left:647px;top:1059px;" width="16" height="16" viewBox="0 0 16 16"><use href="#i-rew"/></svg>
<div class="b tool" style="left:665px;top:1057px;width:21px;height:20px;border-radius:0px 0px 0px 0px;"></div>
<svg class="a" style="left:667px;top:1059px;" width="16" height="16" viewBox="0 0 16 16"><use href="#i-prevkey"/></svg>
<div class="b tool" style="left:685px;top:1057px;width:21px;height:20px;border-radius:0px 0px 0px 0px;"></div>
<svg class="a" style="left:687px;top:1059px;" width="16" height="16" viewBox="0 0 16 16"><use href="#i-playrev"/></svg>
<div class="b tool" style="left:705px;top:1057px;width:21px;height:20px;border-radius:0px 0px 0px 0px;"></div>
<svg class="a" style="left:707px;top:1059px;" width="16" height="16" viewBox="0 0 16 16"><use href="#i-play"/></svg>
<div class="b tool" style="left:725px;top:1057px;width:21px;height:20px;border-radius:0px 0px 0px 0px;"></div>
<svg class="a" style="left:727px;top:1059px;" width="16" height="16" viewBox="0 0 16 16"><use href="#i-nextkey"/></svg>
<div class="b tool" style="left:745px;top:1057px;width:20px;height:20px;border-radius:0px 4px 4px 0px;"></div>
<svg class="a" style="left:747px;top:1059px;" width="16" height="16" viewBox="0 0 16 16"><use href="#i-ff"/></svg>
<div class="b menu" style="left:770px;top:1057px;width:115px;height:20px;border-radius:4px 4px 4px 4px;"></div>
<div class="t " style="left:778px;top:1062px;letter-spacing:-0.569px;color:#fff;">No Sync</div>
<svg class="a" style="left:875px;top:1060px" width="7" height="14" viewBox="0 0 7 14"><path d="M3.5 0.3 L6.3 5.9 L0.7 5.9Z M3.5 13.6 L6.3 8.1 L0.7 8.1Z" fill="#b4b4b4"/></svg>
<div class="b tog" style="left:901px;top:1057px;width:20px;height:20px;border-radius:4px 4px 4px 4px;"></div>
<svg class="a" style="left:903px;top:1059px;" width="16" height="16" viewBox="0 0 16 16"><use href="#i-rec"/></svg>
<div class="b txt" style="left:926px;top:1057px;width:131px;height:20px;border-radius:4px 0px 0px 4px;"></div>
<svg class="a" style="left:929px;top:1059px;" width="16" height="16" viewBox="0 0 16 16"><use href="#i-keyingset"/></svg>
<div class="b tool" style="left:1056px;top:1057px;width:21px;height:20px;border-radius:0px 0px 0px 0px;"></div>
<svg class="a" style="left:1058px;top:1059px;" width="16" height="16" viewBox="0 0 16 16"><use href="#i-key_hlt"/></svg>
<div class="b tool" style="left:1076px;top:1057px;width:21px;height:20px;border-radius:0px 4px 4px 0px;"></div>
<svg class="a" style="left:1078px;top:1059px;" width="16" height="16" viewBox="0 0 16 16"><use href="#i-key_dehlt"/></svg>
<svg class="a" style="left:-1px;top:1068px" width="13" height="13"><path d="M0 1L12 13M0 4L9 13M0 7L6 13M0 10L3 13" stroke="#b0b0b0" stroke-width="1"/><path d="M0 2.5L10.5 13M0 5.5L7.5 13M0 8.5L4.5 13" stroke="#1c1c1c" stroke-width="1"/></svg>
<svg class="a" style="left:-1px;top:968px" width="13" height="13"><path d="M0 1L12 13M0 4L9 13M0 7L6 13M0 10L3 13" stroke="#b0b0b0" stroke-width="1"/><path d="M0 2.5L10.5 13M0 5.5L7.5 13M0 8.5L4.5 13" stroke="#1c1c1c" stroke-width="1"/></svg>
<svg class="a" style="left:-1px;top:14px" width="13" height="13"><path d="M0 1L12 13M0 4L9 13M0 7L6 13M0 10L3 13" stroke="#b0b0b0" stroke-width="1"/><path d="M0 2.5L10.5 13M0 5.5L7.5 13M0 8.5L4.5 13" stroke="#1c1c1c" stroke-width="1"/></svg>
<div class="a" style="left:0px;top:27px;width:1px;height:1053px;background:rgba(255,255,255,0.1);"></div>
<div class="a" style="left:1665px;top:27px;width:1px;height:1053px;background:#080808;"></div>
<div class="a" style="left:1666px;top:27px;width:254px;height:27px;background:#6a6a6a;"></div>
<div class="a" style="left:1666px;top:27px;width:254px;height:1px;background:#828282;"></div>
<div class="a" style="left:1666px;top:28px;width:254px;height:1px;background:#767676;"></div>
<div class="b menu" style="left:1675px;top:30px;width:30px;height:20px;border-radius:4px 4px 4px 4px;"></div>
<svg class="a" style="left:1679px;top:32px;" width="16" height="16" viewBox="0 0 16 16"><use href="#i-outliner"/></svg>
<svg class="a" style="left:1695px;top:33px" width="7" height="14" viewBox="0 0 7 14"><path d="M3.5 0.3 L6.3 5.9 L0.7 5.9Z M3.5 13.6 L6.3 8.1 L0.7 8.1Z" fill="#b4b4b4"/></svg>
<div class="t " style="left:1718px;top:35px;letter-spacing:-0.531px;">View</div>
<div class="t " style="left:1762px;top:35px;letter-spacing:-0.63px;">Search</div>
<div class="b menu" style="left:1809px;top:30px;width:120px;height:20px;border-radius:4px 4px 4px 4px;"></div>
<div class="t " style="left:1817px;top:35px;letter-spacing:-0.542px;color:#fff;">All Scenes</div>
<div class="a" style="left:1666px;top:54px;width:254px;height:157px;background:#727272;"></div>
<div class="a" style="left:1667px;top:74px;width:253px;height:20px;background:#7a7a7a;"></div>
<div class="a" style="left:1667px;top:114px;width:253px;height:20px;background:#7a7a7a;"></div>
<div class="a" style="left:1667px;top:154px;width:253px;height:20px;background:#7a7a7a;"></div>
<div class="a" style="left:1667px;top:194px;width:253px;height:16px;background:#7a7a7a;"></div>
<div class="a" style="left:1667px;top:54px;width:194px;height:20px;background:#878e93;"></div>
<div class="a" style="left:1861px;top:54px;width:1px;height:138px;background:#666666;"></div>
<div class="a" style="left:1881px;top:54px;width:1px;height:138px;background:#666666;"></div>
<div class="a" style="left:1901px;top:54px;width:1px;height:138px;background:#666666;"></div>
<svg class="a" style="left:1667px;top:54px" width="253" height="140"><path d="M26.5 20V110M11 10.5H22M31 70.5H42M31 90.5H42M31 110.5H42" stroke="#3c3c3c" stroke-width="1" fill="none"/></svg>
<svg class="a" style="left:1669px;top:59px" width="10" height="10"><circle cx="5" cy="5" r="4.2" fill="url(#gW)" stroke="#0c0c0c" stroke-width="1"/><path d="M2.5 5H7.5" stroke="#111" stroke-width="1.3"/></svg>
<div class="a" style="left:1687px;top:55px;width:18px;height:18px;border-radius:9px;background:rgba(255,255,255,0.22)"></div>
<svg class="a" style="left:1688px;top:56px;" width="16" height="16" viewBox="0 0 16 16"><use href="#i-scene"/></svg>
<div class="t " style="left:1707px;top:59px;letter-spacing:-0.706px;">Scene</div>
<svg class="a" style="left:1694px;top:79px" width="10" height="10"><circle cx="5" cy="5" r="4.2" fill="url(#gW)" stroke="#0c0c0c" stroke-width="1"/><path d="M2.5 5H7.5M5 2.5V7.5" stroke="#111" stroke-width="1.3"/></svg>
<svg class="a" style="left:1708px;top:76px;" width="16" height="16" viewBox="0 0 16 16"><use href="#i-renderlayers"/></svg>
<div class="t " style="left:1727px;top:79px;letter-spacing:-0.628px;">RenderLayers</div>
<div class="a" style="left:1806px;top:78px;width:1px;height:12px;background:#303030;"></div>
<div class="a" style="left:1815px;top:75px;width:18px;height:18px;border-radius:9px;background:rgba(255,255,255,0.22)"></div>
<svg class="a" style="left:1816px;top:76px;" width="16" height="16" viewBox="0 0 16 16"><use href="#i-renderlayers"/></svg>
<div class="a" style="left:1707px;top:95px;width:18px;height:18px;border-radius:9px;background:rgba(220,220,255,0.3)"></div>
<svg class="a" style="left:1708px;top:96px;" width="16" height="16" viewBox="0 0 16 16"><use href="#i-world"/></svg>
<div class="t " style="left:1727px;top:99px;letter-spacing:-0.506px;">World</div>
<svg class="a" style="left:1689px;top:119px" width="10" height="10"><circle cx="5" cy="5" r="4.2" fill="url(#gW)" stroke="#0c0c0c" stroke-width="1"/><path d="M2.5 5H7.5M5 2.5V7.5" stroke="#111" stroke-width="1.3"/></svg>
<svg class="a" style="left:1708px;top:116px;" width="16" height="16" viewBox="0 0 16 16"><use href="#i-camera_ob"/></svg>
<div class="t " style="left:1727px;top:119px;letter-spacing:-0.693px;">Camera</div>
<div class="a" style="left:1777px;top:118px;width:1px;height:12px;background:#303030;"></div>
<div class="a" style="left:1786px;top:115px;width:18px;height:18px;border-radius:9px;background:rgba(255,255,255,0.22)"></div>
<svg class="a" style="left:1787px;top:116px;" width="16" height="16" viewBox="0 0 16 16"><use href="#i-camera_data"/></svg>
<svg class="a" style="left:1689px;top:139px" width="10" height="10"><circle cx="5" cy="5" r="4.2" fill="url(#gW)" stroke="#0c0c0c" stroke-width="1"/><path d="M2.5 5H7.5M5 2.5V7.5" stroke="#111" stroke-width="1.3"/></svg>
<div class="a" style="left:1707px;top:135px;width:18px;height:18px;border-radius:9px;background:#c4965a"></div>
<svg class="a" style="left:1708px;top:136px;" width="16" height="16" viewBox="0 0 16 16"><use href="#i-mesh_ob"/></svg>
<div class="t " style="left:1727px;top:139px;letter-spacing:-0.852px;color:#fff;">Cube</div>
<div class="a" style="left:1763px;top:138px;width:1px;height:12px;background:#303030;"></div>
<div class="a" style="left:1772px;top:135px;width:18px;height:18px;border-radius:9px;background:rgba(255,255,255,0.25)"></div>
<svg class="a" style="left:1773px;top:136px;" width="16" height="16" viewBox="0 0 16 16"><use href="#i-mesh_data"/></svg>
<svg class="a" style="left:1793px;top:136px;" width="16" height="16" viewBox="0 0 16 16"><use href="#i-wrench"/></svg>
<svg class="a" style="left:1689px;top:159px" width="10" height="10"><circle cx="5" cy="5" r="4.2" fill="url(#gW)" stroke="#0c0c0c" stroke-width="1"/><path d="M2.5 5H7.5M5 2.5V7.5" stroke="#111" stroke-width="1.3"/></svg>
<svg class="a" style="left:1708px;top:156px;" width="16" height="16" viewBox="0 0 16 16"><use href="#i-lamp_ob"/></svg>
<div class="t " style="left:1727px;top:159px;letter-spacing:-0.641px;">Lamp</div>
<div class="a" style="left:1766px;top:158px;width:1px;height:12px;background:#303030;"></div>
<svg class="a" style="left:1776px;top:156px;" width="16" height="16" viewBox="0 0 16 16"><use href="#i-lamp_data"/></svg>
<svg class="a" style="left:1863px;top:116px;" width="16" height="16" viewBox="0 0 16 16"><use href="#i-eye"/></svg>
<svg class="a" style="left:1884px;top:116px;" width="16" height="16" viewBox="0 0 16 16"><use href="#i-cursor"/></svg>
<svg class="a" style="left:1903px;top:116px;" width="16" height="16" viewBox="0 0 16 16"><use href="#i-cam_small"/></svg>
<svg class="a" style="left:1863px;top:136px;" width="16" height="16" viewBox="0 0 16 16"><use href="#i-eye"/></svg>
<svg class="a" style="left:1884px;top:136px;" width="16" height="16" viewBox="0 0 16 16"><use href="#i-cursor"/></svg>
<svg class="a" style="left:1903px;top:136px;" width="16" height="16" viewBox="0 0 16 16"><use href="#i-cam_small"/></svg>
<svg class="a" style="left:1863px;top:156px;" width="16" height="16" viewBox="0 0 16 16"><use href="#i-eye"/></svg>
<svg class="a" style="left:1884px;top:156px;" width="16" height="16" viewBox="0 0 16 16"><use href="#i-cursor"/></svg>
<svg class="a" style="left:1903px;top:156px;" width="16" height="16" viewBox="0 0 16 16"><use href="#i-cam_small"/></svg>
<div class="a" style="left:1670px;top:194px;width:245px;height:13px;border-radius:6.5px;background:#585858;border:1px solid #4a4a4a"></div>
<div class="a" style="left:1670px;top:194px;width:206px;height:13px;border-radius:6.5px;background:linear-gradient(#8a8a8a,#7c7c7c);border:1px solid #4a4a4a"></div>
<svg class="a" style="left:1907px;top:28px" width="13" height="13"><path d="M1 0L13 12M4 0L13 9M7 0L13 6M10 0L13 3" stroke="#b0b0b0" stroke-width="1"/><path d="M2.5 0L13 10.5M5.5 0L13 7.5M8.5 0L13 4.5M11.5 0L13 1.5" stroke="#1c1c1c" stroke-width="1"/></svg>
<svg class="a" style="left:1907px;top:1px" width="13" height="13"><path d="M1 0L13 12M4 0L13 9M7 0L13 6M10 0L13 3" stroke="#b0b0b0" stroke-width="1"/><path d="M2.5 0L13 10.5M5.5 0L13 7.5M8.5 0L13 4.5M11.5 0L13 1.5" stroke="#1c1c1c" stroke-width="1"/></svg>
<div class="a" style="left:1918px;top:27px;width:2px;height:1053px;background:rgba(255,255,255,0.07);"></div>
<svg class="a" style="left:1667px;top:196px" width="13" height="13"><path d="M0 1L12 13M0 4L9 13M0 7L6 13M0 10L3 13" stroke="#b0b0b0" stroke-width="1"/><path d="M0 2.5L10.5 13M0 5.5L7.5 13M0 8.5L4.5 13" stroke="#1c1c1c" stroke-width="1"/></svg>
<div class="a" style="left:1666px;top:211px;width:254px;height:1px;background:#080808;"></div>
<div class="a" style="left:1666px;top:212px;width:254px;height:26px;background:#6a6a6a;"></div>
<div class="a" style="left:1666px;top:212px;width:254px;height:1px;background:#828282;"></div>
<div class="a" style="left:1666px;top:213px;width:254px;height:1px;background:#767676;"></div>
<div class="a" style="left:1666px;top:238px;width:254px;height:842px;background:#727272;"></div>
<div class="a" style="left:1666px;top:27px;width:1px;height:1053px;background:#808080;"></div>
<div class="b menu" style="left:1675px;top:215px;width:30px;height:20px;border-radius:4px 4px 4px 4px;"></div>
<svg class="a" style="left:1679px;top:217px;" width="16" height="16" viewBox="0 0 16 16"><use href="#i-buttons"/></svg>
<svg class="a" style="left:1695px;top:218px" width="7" height="14" viewBox="0 0 7 14"><path d="M3.5 0.3 L6.3 5.9 L0.7 5.9Z M3.5 13.6 L6.3 8.1 L0.7 8.1Z" fill="#b4b4b4"/></svg>
<div class="b radio" style="left:1713px;top:215px;width:21px;height:20px;border-radius:4px 0px 0px 4px;"></div>
<svg class="a" style="left:1715px;top:217px;opacity:.82" width="16" height="16" viewBox="0 0 16 16"><use href="#i-cam_big"/></svg>
<div class="b radio" style="left:1733px;top:215px;width:21px;height:20px;border-radius:0px 0px 0px 0px;"></div>
<svg class="a" style="left:1735px;top:217px;opacity:.82" width="16" height="16" viewBox="0 0 16 16"><use href="#i-renderlayers"/></svg>
<div class="b radio" style="left:1753px;top:215px;width:21px;height:20px;border-radius:0px 0px 0px 0px;"></div>
<svg class="a" style="left:1755px;top:217px;opacity:.82" width="16" height="16" viewBox="0 0 16 16"><use href="#i-scene"/></svg>
<div class="b radio" style="left:1773px;top:215px;width:21px;height:20px;border-radius:0px 0px 0px 0px;"></div>
<svg class="a" style="left:1775px;top:217px;opacity:.82" width="16" height="16" viewBox="0 0 16 16"><use href="#i-world"/></svg>
<div class="b radio" style="left:1793px;top:215px;width:21px;height:20px;border-radius:0px 0px 0px 0px;"></div>
<svg class="a" style="left:1795px;top:217px;opacity:.82" width="16" height="16" viewBox="0 0 16 16"><use href="#i-object_dim"/></svg>
<div class="b radio" style="left:1813px;top:215px;width:21px;height:20px;border-radius:0px 0px 0px 0px;"></div>
<svg class="a" style="left:1815px;top:217px;opacity:.82" width="16" height="16" viewBox="0 0 16 16"><use href="#i-constraint"/></svg>
<div class="b radios" style="left:1833px;top:215px;width:21px;height:20px;border-radius:0px 0px 0px 0px;"></div>
<svg class="a" style="left:1835px;top:217px;" width="16" height="16" viewBox="0 0 16 16"><use href="#i-wrench_w"/></svg>
<div class="b radio" style="left:1853px;top:215px;width:21px;height:20px;border-radius:0px 0px 0px 0px;"></div>
<svg class="a" style="left:1855px;top:217px;opacity:.82" width="16" height="16" viewBox="0 0 16 16"><use href="#i-mesh_data_t"/></svg>
<div class="b radio" style="left:1873px;top:215px;width:21px;height:20px;border-radius:0px 0px 0px 0px;"></div>
<svg class="a" style="left:1875px;top:217px;opacity:.82" width="16" height="16" viewBox="0 0 16 16"><use href="#i-material"/></svg>
<div class="b radio" style="left:1893px;top:215px;width:21px;height:20px;border-radius:0px 0px 0px 0px;"></div>
<svg class="a" style="left:1895px;top:217px;opacity:.82" width="16" height="16" viewBox="0 0 16 16"><use href="#i-texture"/></svg>
<div class="b radio" style="left:1913px;top:215px;width:21px;height:20px;border-radius:0px 0px 0px 0px;"></div>
<svg class="a" style="left:1915px;top:217px;opacity:.82" width="16" height="16" viewBox="0 0 16 16"><use href="#i-particles"/></svg>
<svg class="a" style="left:1907px;top:213px" width="13" height="13"><path d="M1 0L13 12M4 0L13 9M7 0L13 6M10 0L13 3" stroke="#b0b0b0" stroke-width="1"/><path d="M2.5 0L13 10.5M5.5 0L13 7.5M8.5 0L13 4.5M11.5 0L13 1.5" stroke="#1c1c1c" stroke-width="1"/></svg>
<svg class="a" style="left:1676px;top:248px;" width="16" height="16" viewBox="0 0 16 16"><use href="#i-pin"/></svg>
<svg class="a" style="left:1699px;top:248px;" width="16" height="16" viewBox="0 0 16 16"><use href="#i-scene"/></svg>
<svg class="a" style="left:1719px;top:252px" width="5" height="8"><path d="M0.5 0.5L4.5 4L0.5 7.5Z" fill="#3a3a3a"/></svg>
<svg class="a" style="left:1739px;top:248px;" width="16" height="16" viewBox="0 0 16 16"><use href="#i-object"/></svg>
<div class="t " style="left:1758px;top:251px;letter-spacing:-0.852px;">Cube</div>
<div class="b menu" style="left:1674px;top:282px;width:238px;height:20px;border-radius:4px 4px 4px 4px;"></div>
<div class="t " style="left:1681px;top:287px;letter-spacing:-0.607px;color:#fff;">Add Modifier</div>
<svg class="a" style="left:1902px;top:285px" width="7" height="14" viewBox="0 0 7 14"><path d="M3.5 0.3 L6.3 5.9 L0.7 5.9Z M3.5 13.6 L6.3 8.1 L0.7 8.1Z" fill="#b4b4b4"/></svg>
<div class="a" style="left:1674px;top:307px;width:238px;height:234px;background:#808080;border:1px solid #2e2e2e;border-radius:4px"></div>
<div class="a" style="left:1675px;top:339px;width:236px;height:1px;background:#2e2e2e;"></div>
<svg class="a" style="left:1680px;top:321px" width="12" height="9"><path d="M0.9 1H11.1L6 7.8Z" fill="#f4f4f4" stroke="#1a1a1a" stroke-width="1.1" stroke-linejoin="round"/></svg>
<svg class="a" style="left:1705px;top:317px;" width="16" height="16" viewBox="0 0 16 16"><use href="#i-mod_mirror"/></svg>
<div class="b txt" style="left:1723px;top:315px;width:28px;height:20px;border-radius:4px 4px 4px 4px;"></div>
<div class="t " style="left:1731px;top:320px;letter-spacing:-0.354px;">Mir</div>
<div class="b togs" style="left:1759px;top:315px;width:19px;height:20px;border-radius:4px 0px 0px 4px;"></div>
<svg class="a" style="left:1760px;top:317px;" width="16" height="16" viewBox="0 0 16 16"><use href="#i-cam_big"/></svg>
<div class="b togs" style="left:1777px;top:315px;width:23px;height:20px;border-radius:0px 0px 0px 0px;"></div>
<svg class="a" style="left:1780px;top:317px;" width="16" height="16" viewBox="0 0 16 16"><use href="#i-eye"/></svg>
<div class="b togs" style="left:1799px;top:315px;width:22px;height:20px;border-radius:0px 0px 0px 0px;"></div>
<svg class="a" style="left:1802px;top:317px;" width="16" height="16" viewBox="0 0 16 16"><use href="#i-editmode"/></svg>
<div class="b tog" style="left:1820px;top:315px;width:19px;height:20px;border-radius:0px 4px 4px 0px;"></div>
<svg class="a" style="left:1822px;top:317px;" width="16" height="16" viewBox="0 0 16 16"><use href="#i-mesh_data_w"/></svg>
<div class="b tog" style="left:1847px;top:315px;width:18px;height:20px;border-radius:4px 0px 0px 4px;"></div>
<svg class="a" style="left:1851px;top:321px" width="10" height="7"><path d="M0.7 6.3H9.3L5 0.7Z" fill="#f0f0f0" stroke="#222" stroke-width="1"/></svg>
<div class="b tog" style="left:1864px;top:315px;width:18px;height:20px;border-radius:0px 4px 4px 0px;"></div>
<svg class="a" style="left:1868px;top:322px" width="10" height="7"><path d="M0.7 0.7H9.3L5 6.3Z" fill="#f0f0f0" stroke="#222" stroke-width="1"/></svg>
<svg class="a" style="left:1893px;top:319px" width="12" height="12"><path d="M2 2L10 10M10 2L2 10" stroke="#1a1a1a" stroke-width="3.4" stroke-linecap="round"/><path d="M2 2L10 10M10 2L2 10" stroke="#f4f4f4" stroke-width="1.8" stroke-linecap="round"/></svg>
<div class="b tool" style="left:1679px;top:348px;width:110px;height:20px;border-radius:4px 4px 4px 4px;"></div>
<div class="t" style="left:1633px;width:200px;text-align:center;top:353px;letter-spacing:-0.616px;">Apply</div>
<div class="b tool" style="left:1797px;top:348px;width:110px;height:20px;border-radius:4px 4px 4px 4px;"></div>
<div class="t" style="left:1752px;width:200px;text-align:center;top:353px;letter-spacing:-0.73px;">Copy</div>
<div class="t " style="left:1686px;top:381px;letter-spacing:-0.509px;">Axis:</div>
<div class="t " style="left:1748px;top:381px;letter-spacing:-0.645px;">Options:</div>
<div class="t " style="left:1835px;top:381px;letter-spacing:-0.411px;">Textures:</div>
<div class="b opt" style="left:1682px;top:401px;width:14px;height:14px"></div>
<svg class="a" style="left:1683px;top:398px" width="14" height="14"><path d="M2.5 7.5L5.5 11L11.5 2.5" stroke="#f0f0f0" stroke-width="1.7" fill="none"/></svg>
<div class="t " style="left:1704px;top:403px;letter-spacing:-0.531px;color:#fff;">X</div>
<div class="b opt" style="left:1682px;top:423px;width:14px;height:14px"></div>
<div class="t " style="left:1704px;top:425px;letter-spacing:-0.719px;">Y</div>
<div class="b opt" style="left:1682px;top:445px;width:14px;height:14px"></div>
<div class="t " style="left:1704px;top:447px;letter-spacing:-0.531px;">Z</div>
<div class="b opt" style="left:1743px;top:401px;width:14px;height:14px"></div>
<svg class="a" style="left:1744px;top:398px" width="14" height="14"><path d="M2.5 7.5L5.5 11L11.5 2.5" stroke="#f0f0f0" stroke-width="1.7" fill="none"/></svg>
<div class="t " style="left:1765px;top:403px;letter-spacing:-0.666px;color:#fff;">Merge</div>
<div class="b opt" style="left:1743px;top:423px;width:14px;height:14px"></div>
<div class="t " style="left:1765px;top:425px;letter-spacing:-0.6px;">Clipping</div>
<div class="b opt" style="left:1743px;top:445px;width:14px;height:14px"></div>
<svg class="a" style="left:1744px;top:442px" width="14" height="14"><path d="M2.5 7.5L5.5 11L11.5 2.5" stroke="#f0f0f0" stroke-width="1.7" fill="none"/></svg>
<div class="t " style="left:1765px;top:447px;letter-spacing:-0.434px;color:#fff;">Vertex Gr</div>
<div class="b opt" style="left:1830px;top:401px;width:14px;height:14px"></div>
<div class="t " style="left:1852px;top:403px;letter-spacing:-0.047px;">U</div>
<div class="b opt" style="left:1830px;top:423px;width:14px;height:14px"></div>
<div class="t " style="left:1852px;top:425px;letter-spacing:-0.531px;">V</div>
<div class="b num" style="left:1679px;top:464px;width:228px;height:20px;border-radius:10px 10px 10px 10px;"></div>
<svg class="a" style="left:1686px;top:470px" width="5" height="8"><path d="M4.5 0.5L0.5 4L4.5 7.5Z" fill="#5a5a5a"/></svg>
<svg class="a" style="left:1895px;top:470px" width="5" height="8"><path d="M0.5 0.5L4.5 4L0.5 7.5Z" fill="#5a5a5a"/></svg>
<div class="t " style="left:1694px;top:469px;letter-spacing:-0.484px;">Merge Limit:</div>
<div class="t" style="left:1691px;width:200px;text-align:right;top:469px;letter-spacing:-0.062px;">0.001000</div>
<div class="t " style="left:1686px;top:491px;letter-spacing:-0.46px;">Mirror Object:</div>
<div class="b txt" style="left:1679px;top:508px;width:228px;height:20px;border-radius:4px 4px 4px 4px;"></div>
<svg class="a" style="left:1683px;top:510px;" width="16" height="16" viewBox="0 0 16 16"><use href="#i-object"/></svg>
<svg class="a" style="left:1667px;top:1067px" width="13" height="13"><path d="M0 1L12 13M0 4L9 13M0 7L6 13M0 10L3 13" stroke="#b0b0b0" stroke-width="1"/><path d="M0 2.5L10.5 13M0 5.5L7.5 13M0 8.5L4.5 13" stroke="#1c1c1c" stroke-width="1"/></svg></div></body></html>
